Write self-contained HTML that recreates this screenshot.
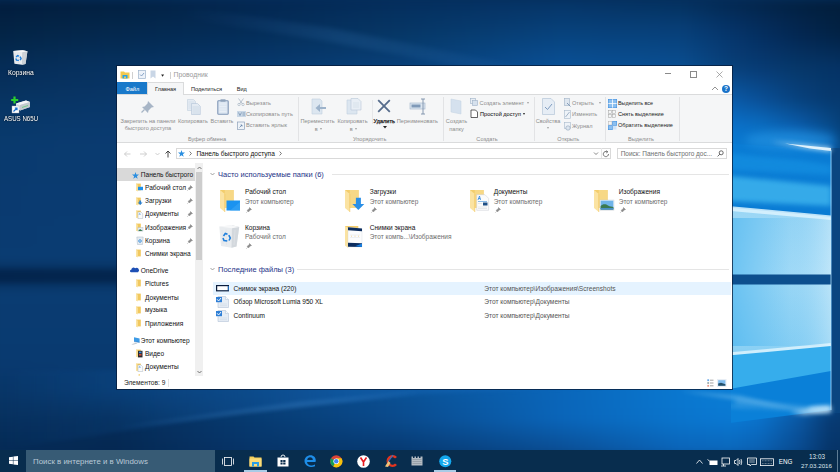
<!DOCTYPE html>
<html><head><meta charset="utf-8"><title>Explorer</title>
<style>
html,body{margin:0;padding:0;width:840px;height:472px;overflow:hidden;background:#06305e;}
.r{position:absolute;}
.t{position:absolute;white-space:nowrap;line-height:1.2;font-family:"Liberation Sans", sans-serif;}
svg.r{overflow:visible;}
</style></head><body>
<svg class="r" style="left:0;top:0" width="840" height="472" viewBox="0 0 840 472">
<defs><linearGradient id="w0" gradientUnits="userSpaceOnUse" x1="0" x2="840" y1="0" y2="0"><stop offset="0.0000" stop-color="#021d3d"/><stop offset="0.1381" stop-color="#022142"/><stop offset="0.2976" stop-color="#032751"/><stop offset="0.4762" stop-color="#042e5d"/><stop offset="0.6667" stop-color="#053669"/><stop offset="0.8095" stop-color="#043261"/><stop offset="0.8714" stop-color="#032953"/><stop offset="0.9048" stop-color="#03264c"/><stop offset="0.9524" stop-color="#022142"/><stop offset="0.9893" stop-color="#021e3d"/><stop offset="1.0000" stop-color="#021e3b"/></linearGradient><linearGradient id="w1" gradientUnits="userSpaceOnUse" x1="0" x2="840" y1="0" y2="0"><stop offset="0.0000" stop-color="#021f40"/><stop offset="0.1381" stop-color="#032345"/><stop offset="0.2976" stop-color="#032953"/><stop offset="0.4762" stop-color="#053160"/><stop offset="0.6667" stop-color="#06396e"/><stop offset="0.8095" stop-color="#053668"/><stop offset="0.8714" stop-color="#042c59"/><stop offset="0.9048" stop-color="#032851"/><stop offset="0.9524" stop-color="#022246"/><stop offset="0.9893" stop-color="#02203f"/><stop offset="1.0000" stop-color="#021f3e"/></linearGradient><linearGradient id="w2" gradientUnits="userSpaceOnUse" x1="0" x2="840" y1="0" y2="0"><stop offset="0.0000" stop-color="#032142"/><stop offset="0.1381" stop-color="#032548"/><stop offset="0.2976" stop-color="#042a55"/><stop offset="0.4762" stop-color="#053362"/><stop offset="0.6667" stop-color="#063c73"/><stop offset="0.8095" stop-color="#063a6f"/><stop offset="0.8714" stop-color="#042f60"/><stop offset="0.9048" stop-color="#042a57"/><stop offset="0.9524" stop-color="#03244a"/><stop offset="0.9893" stop-color="#022142"/><stop offset="1.0000" stop-color="#022040"/></linearGradient><linearGradient id="w3" gradientUnits="userSpaceOnUse" x1="0" x2="840" y1="0" y2="0"><stop offset="0.0000" stop-color="#032344"/><stop offset="0.1381" stop-color="#04274c"/><stop offset="0.2976" stop-color="#042c57"/><stop offset="0.4762" stop-color="#063564"/><stop offset="0.6667" stop-color="#074079"/><stop offset="0.8095" stop-color="#073e76"/><stop offset="0.8714" stop-color="#053266"/><stop offset="0.9048" stop-color="#042d5c"/><stop offset="0.9524" stop-color="#03254e"/><stop offset="0.9893" stop-color="#022245"/><stop offset="1.0000" stop-color="#022142"/></linearGradient><linearGradient id="w4" gradientUnits="userSpaceOnUse" x1="0" x2="840" y1="0" y2="0"><stop offset="0.0000" stop-color="#032547"/><stop offset="0.1381" stop-color="#042950"/><stop offset="0.2976" stop-color="#042e5a"/><stop offset="0.4762" stop-color="#063868"/><stop offset="0.6667" stop-color="#07437e"/><stop offset="0.8095" stop-color="#07417c"/><stop offset="0.8714" stop-color="#05356b"/><stop offset="0.9048" stop-color="#042f61"/><stop offset="0.9524" stop-color="#032752"/><stop offset="0.9893" stop-color="#022449"/><stop offset="1.0000" stop-color="#022347"/></linearGradient><linearGradient id="w5" gradientUnits="userSpaceOnUse" x1="0" x2="840" y1="0" y2="0"><stop offset="0.0000" stop-color="#04274b"/><stop offset="0.1381" stop-color="#052b54"/><stop offset="0.2976" stop-color="#05315f"/><stop offset="0.4762" stop-color="#073a6c"/><stop offset="0.6667" stop-color="#084785"/><stop offset="0.8095" stop-color="#084581"/><stop offset="0.8714" stop-color="#06386f"/><stop offset="0.9048" stop-color="#053266"/><stop offset="0.9524" stop-color="#042b58"/><stop offset="0.9893" stop-color="#032851"/><stop offset="1.0000" stop-color="#03274f"/></linearGradient><linearGradient id="w6" gradientUnits="userSpaceOnUse" x1="0" x2="840" y1="0" y2="0"><stop offset="0.0000" stop-color="#04294f"/><stop offset="0.1381" stop-color="#052e58"/><stop offset="0.2976" stop-color="#063364"/><stop offset="0.4762" stop-color="#073c70"/><stop offset="0.6667" stop-color="#094a8b"/><stop offset="0.8095" stop-color="#094887"/><stop offset="0.8714" stop-color="#073a72"/><stop offset="0.9048" stop-color="#06356a"/><stop offset="0.9524" stop-color="#052f5e"/><stop offset="0.9893" stop-color="#042c58"/><stop offset="1.0000" stop-color="#042b56"/></linearGradient><linearGradient id="w7" gradientUnits="userSpaceOnUse" x1="0" x2="840" y1="0" y2="0"><stop offset="0.0000" stop-color="#052b53"/><stop offset="0.1381" stop-color="#06305d"/><stop offset="0.2976" stop-color="#063668"/><stop offset="0.4762" stop-color="#083e75"/><stop offset="0.6667" stop-color="#094d91"/><stop offset="0.8095" stop-color="#094b8c"/><stop offset="0.8714" stop-color="#073d75"/><stop offset="0.9048" stop-color="#06386f"/><stop offset="0.9524" stop-color="#053364"/><stop offset="0.9893" stop-color="#05305f"/><stop offset="1.0000" stop-color="#042f5e"/></linearGradient><linearGradient id="w8" gradientUnits="userSpaceOnUse" x1="0" x2="840" y1="0" y2="0"><stop offset="0.0000" stop-color="#052c57"/><stop offset="0.1381" stop-color="#063260"/><stop offset="0.2976" stop-color="#07386d"/><stop offset="0.4762" stop-color="#084079"/><stop offset="0.6667" stop-color="#0a5096"/><stop offset="0.8095" stop-color="#0a4f91"/><stop offset="0.8714" stop-color="#08417b"/><stop offset="0.9048" stop-color="#073b74"/><stop offset="0.9524" stop-color="#063769"/><stop offset="0.9893" stop-color="#053366"/><stop offset="1.0000" stop-color="#053265"/></linearGradient><linearGradient id="w9" gradientUnits="userSpaceOnUse" x1="0" x2="840" y1="0" y2="0"><stop offset="0.0000" stop-color="#062e5a"/><stop offset="0.1381" stop-color="#073362"/><stop offset="0.2976" stop-color="#073a6f"/><stop offset="0.4762" stop-color="#08427d"/><stop offset="0.6667" stop-color="#0a5096"/><stop offset="0.8095" stop-color="#0a5196"/><stop offset="0.8714" stop-color="#094786"/><stop offset="0.9048" stop-color="#08407d"/><stop offset="0.9524" stop-color="#063a6e"/><stop offset="0.9893" stop-color="#053568"/><stop offset="1.0000" stop-color="#053468"/></linearGradient><linearGradient id="w10" gradientUnits="userSpaceOnUse" x1="0" x2="840" y1="0" y2="0"><stop offset="0.0000" stop-color="#06305c"/><stop offset="0.1381" stop-color="#073464"/><stop offset="0.2976" stop-color="#083b72"/><stop offset="0.4762" stop-color="#094480"/><stop offset="0.6667" stop-color="#0a5097"/><stop offset="0.8095" stop-color="#0a539a"/><stop offset="0.8714" stop-color="#094d91"/><stop offset="0.9048" stop-color="#094686"/><stop offset="0.9524" stop-color="#073c74"/><stop offset="0.9893" stop-color="#06376b"/><stop offset="1.0000" stop-color="#06366a"/></linearGradient><linearGradient id="w11" gradientUnits="userSpaceOnUse" x1="0" x2="840" y1="0" y2="0"><stop offset="0.0000" stop-color="#07325f"/><stop offset="0.1381" stop-color="#083566"/><stop offset="0.2976" stop-color="#083d74"/><stop offset="0.4762" stop-color="#094684"/><stop offset="0.6667" stop-color="#0a5197"/><stop offset="0.8095" stop-color="#0a559f"/><stop offset="0.8714" stop-color="#0a549d"/><stop offset="0.9048" stop-color="#094b8f"/><stop offset="0.9524" stop-color="#073f79"/><stop offset="0.9893" stop-color="#06386d"/><stop offset="1.0000" stop-color="#06386d"/></linearGradient><linearGradient id="w12" gradientUnits="userSpaceOnUse" x1="0" x2="840" y1="0" y2="0"><stop offset="0.0000" stop-color="#073462"/><stop offset="0.1381" stop-color="#083668"/><stop offset="0.2976" stop-color="#083e77"/><stop offset="0.4762" stop-color="#094888"/><stop offset="0.6667" stop-color="#095197"/><stop offset="0.8095" stop-color="#0a57a3"/><stop offset="0.8714" stop-color="#0a5aa8"/><stop offset="0.9048" stop-color="#0a5098"/><stop offset="0.9524" stop-color="#07427e"/><stop offset="0.9893" stop-color="#063a70"/><stop offset="1.0000" stop-color="#063a70"/></linearGradient><linearGradient id="w13" gradientUnits="userSpaceOnUse" x1="0" x2="840" y1="0" y2="0"><stop offset="0.0000" stop-color="#073565"/><stop offset="0.1381" stop-color="#08376a"/><stop offset="0.2976" stop-color="#093f79"/><stop offset="0.4762" stop-color="#094989"/><stop offset="0.6667" stop-color="#0a549d"/><stop offset="0.8095" stop-color="#0a5dac"/><stop offset="0.8714" stop-color="#0a61b2"/><stop offset="0.9048" stop-color="#0a59a5"/><stop offset="0.9524" stop-color="#084a8b"/><stop offset="0.9893" stop-color="#063f78"/><stop offset="1.0000" stop-color="#063c73"/></linearGradient><linearGradient id="w14" gradientUnits="userSpaceOnUse" x1="0" x2="840" y1="0" y2="0"><stop offset="0.0000" stop-color="#083767"/><stop offset="0.1381" stop-color="#09386c"/><stop offset="0.2976" stop-color="#09407a"/><stop offset="0.4762" stop-color="#0a498b"/><stop offset="0.6667" stop-color="#0a58a3"/><stop offset="0.8095" stop-color="#0a63b5"/><stop offset="0.8714" stop-color="#0a68bc"/><stop offset="0.9048" stop-color="#0a62b2"/><stop offset="0.9524" stop-color="#095199"/><stop offset="0.9893" stop-color="#07447f"/><stop offset="1.0000" stop-color="#063e76"/></linearGradient><linearGradient id="w15" gradientUnits="userSpaceOnUse" x1="0" x2="840" y1="0" y2="0"><stop offset="0.0000" stop-color="#08386a"/><stop offset="0.1381" stop-color="#09396e"/><stop offset="0.2976" stop-color="#09417c"/><stop offset="0.4762" stop-color="#0a4a8c"/><stop offset="0.6667" stop-color="#0a5ca8"/><stop offset="0.8095" stop-color="#0a69bd"/><stop offset="0.8714" stop-color="#0a6fc7"/><stop offset="0.9048" stop-color="#0a6bbe"/><stop offset="0.9524" stop-color="#0a59a6"/><stop offset="0.9893" stop-color="#074987"/><stop offset="1.0000" stop-color="#06407a"/></linearGradient><linearGradient id="w16" gradientUnits="userSpaceOnUse" x1="0" x2="840" y1="0" y2="0"><stop offset="0.0000" stop-color="#08396b"/><stop offset="0.1381" stop-color="#093a6f"/><stop offset="0.2976" stop-color="#0a417d"/><stop offset="0.4762" stop-color="#0a4a8c"/><stop offset="0.6667" stop-color="#0a5eab"/><stop offset="0.8095" stop-color="#0a6dc2"/><stop offset="0.8714" stop-color="#0a74cc"/><stop offset="0.9048" stop-color="#0a71c6"/><stop offset="0.9524" stop-color="#0a63b5"/><stop offset="0.9893" stop-color="#085399"/><stop offset="1.0000" stop-color="#06447f"/></linearGradient><linearGradient id="w17" gradientUnits="userSpaceOnUse" x1="0" x2="840" y1="0" y2="0"><stop offset="0.0000" stop-color="#093a6d"/><stop offset="0.1381" stop-color="#0a3a70"/><stop offset="0.2976" stop-color="#0a427d"/><stop offset="0.4762" stop-color="#0a4a8c"/><stop offset="0.6667" stop-color="#0a60ad"/><stop offset="0.8095" stop-color="#0a70c5"/><stop offset="0.8714" stop-color="#0a78d0"/><stop offset="0.9048" stop-color="#0a76cc"/><stop offset="0.9524" stop-color="#0a6ec3"/><stop offset="0.9893" stop-color="#095eac"/><stop offset="1.0000" stop-color="#074884"/></linearGradient><linearGradient id="w18" gradientUnits="userSpaceOnUse" x1="0" x2="840" y1="0" y2="0"><stop offset="0.0000" stop-color="#093a6e"/><stop offset="0.1381" stop-color="#0a3b70"/><stop offset="0.2976" stop-color="#0a427e"/><stop offset="0.4762" stop-color="#0a4b8d"/><stop offset="0.6667" stop-color="#0a61ae"/><stop offset="0.8095" stop-color="#0a73c7"/><stop offset="0.8714" stop-color="#0a7ad2"/><stop offset="0.9048" stop-color="#0a7ad0"/><stop offset="0.9524" stop-color="#0a74cc"/><stop offset="0.9893" stop-color="#0a65b9"/><stop offset="1.0000" stop-color="#074987"/></linearGradient><linearGradient id="w19" gradientUnits="userSpaceOnUse" x1="0" x2="840" y1="0" y2="0"><stop offset="0.0000" stop-color="#093a6e"/><stop offset="0.1381" stop-color="#0a3b70"/><stop offset="0.2976" stop-color="#0a437f"/><stop offset="0.4762" stop-color="#0a4d8f"/><stop offset="0.6667" stop-color="#0a62af"/><stop offset="0.8095" stop-color="#0a73c7"/><stop offset="0.8714" stop-color="#0a7ad2"/><stop offset="0.9048" stop-color="#0a7ad0"/><stop offset="0.9524" stop-color="#0a75cd"/><stop offset="0.9893" stop-color="#0a68bd"/><stop offset="1.0000" stop-color="#074784"/></linearGradient><linearGradient id="w20" gradientUnits="userSpaceOnUse" x1="0" x2="840" y1="0" y2="0"><stop offset="0.0000" stop-color="#093a6f"/><stop offset="0.1381" stop-color="#0a3b71"/><stop offset="0.2976" stop-color="#0a4480"/><stop offset="0.4762" stop-color="#0a4f92"/><stop offset="0.6667" stop-color="#0a63b1"/><stop offset="0.8095" stop-color="#0a73c7"/><stop offset="0.8714" stop-color="#0a79d1"/><stop offset="0.9048" stop-color="#0a79d0"/><stop offset="0.9524" stop-color="#0a75cd"/><stop offset="0.9893" stop-color="#0a6bc0"/><stop offset="1.0000" stop-color="#074581"/></linearGradient><linearGradient id="w21" gradientUnits="userSpaceOnUse" x1="0" x2="840" y1="0" y2="0"><stop offset="0.0000" stop-color="#093a6f"/><stop offset="0.1381" stop-color="#0a3b71"/><stop offset="0.2976" stop-color="#0a4682"/><stop offset="0.4762" stop-color="#0a5195"/><stop offset="0.6667" stop-color="#0a64b2"/><stop offset="0.8095" stop-color="#0a73c8"/><stop offset="0.8714" stop-color="#0a79d1"/><stop offset="0.9048" stop-color="#0a79d0"/><stop offset="0.9524" stop-color="#0a76ce"/><stop offset="0.9893" stop-color="#0a6ec4"/><stop offset="1.0000" stop-color="#07437e"/></linearGradient><linearGradient id="w22" gradientUnits="userSpaceOnUse" x1="0" x2="840" y1="0" y2="0"><stop offset="0.0000" stop-color="#0a3a6f"/><stop offset="0.1381" stop-color="#0a3c71"/><stop offset="0.2976" stop-color="#0a4783"/><stop offset="0.4762" stop-color="#0a5397"/><stop offset="0.6667" stop-color="#0a65b3"/><stop offset="0.8095" stop-color="#0a73c8"/><stop offset="0.8714" stop-color="#0a79d1"/><stop offset="0.9048" stop-color="#0a79d0"/><stop offset="0.9524" stop-color="#0a77cf"/><stop offset="0.9893" stop-color="#0a71c7"/><stop offset="1.0000" stop-color="#08417b"/></linearGradient><linearGradient id="w23" gradientUnits="userSpaceOnUse" x1="0" x2="840" y1="0" y2="0"><stop offset="0.0000" stop-color="#0a3a70"/><stop offset="0.1381" stop-color="#0a3c72"/><stop offset="0.2976" stop-color="#0a4884"/><stop offset="0.4762" stop-color="#0a559a"/><stop offset="0.6667" stop-color="#0a66b4"/><stop offset="0.8095" stop-color="#0a73c8"/><stop offset="0.8714" stop-color="#0a78d0"/><stop offset="0.9048" stop-color="#0a78d0"/><stop offset="0.9524" stop-color="#0a77cf"/><stop offset="0.9893" stop-color="#0a74cb"/><stop offset="1.0000" stop-color="#083f78"/></linearGradient><linearGradient id="w24" gradientUnits="userSpaceOnUse" x1="0" x2="840" y1="0" y2="0"><stop offset="0.0000" stop-color="#0a3a70"/><stop offset="0.1381" stop-color="#0a3c72"/><stop offset="0.2976" stop-color="#0a4986"/><stop offset="0.4762" stop-color="#0a579c"/><stop offset="0.6667" stop-color="#0a67b5"/><stop offset="0.8095" stop-color="#0a73c8"/><stop offset="0.8714" stop-color="#0a78d0"/><stop offset="0.9048" stop-color="#0a78d0"/><stop offset="0.9524" stop-color="#0a78d0"/><stop offset="0.9893" stop-color="#0a77ce"/><stop offset="1.0000" stop-color="#083d75"/></linearGradient><linearGradient id="w25" gradientUnits="userSpaceOnUse" x1="0" x2="840" y1="0" y2="0"><stop offset="0.0000" stop-color="#0a3a70"/><stop offset="0.1381" stop-color="#0a3c72"/><stop offset="0.2976" stop-color="#0a4986"/><stop offset="0.4762" stop-color="#0a589d"/><stop offset="0.6667" stop-color="#0a67b6"/><stop offset="0.8095" stop-color="#0a73c8"/><stop offset="0.8714" stop-color="#0a78d0"/><stop offset="0.9048" stop-color="#0a78d0"/><stop offset="0.9524" stop-color="#0a78d0"/><stop offset="0.9893" stop-color="#0a78d0"/><stop offset="1.0000" stop-color="#083c74"/></linearGradient><linearGradient id="w26" gradientUnits="userSpaceOnUse" x1="0" x2="840" y1="0" y2="0"><stop offset="0.0000" stop-color="#0a3a70"/><stop offset="0.1381" stop-color="#0a3c72"/><stop offset="0.2976" stop-color="#0a4986"/><stop offset="0.4762" stop-color="#0a589d"/><stop offset="0.6667" stop-color="#0a67b6"/><stop offset="0.8095" stop-color="#0a73c8"/><stop offset="0.8714" stop-color="#0a78d0"/><stop offset="0.9048" stop-color="#0a78d0"/><stop offset="0.9524" stop-color="#0a78d0"/><stop offset="0.9893" stop-color="#0a78d0"/><stop offset="1.0000" stop-color="#083c74"/></linearGradient><linearGradient id="w27" gradientUnits="userSpaceOnUse" x1="0" x2="840" y1="0" y2="0"><stop offset="0.0000" stop-color="#0a3b71"/><stop offset="0.1381" stop-color="#0a3c72"/><stop offset="0.2976" stop-color="#0a4986"/><stop offset="0.4762" stop-color="#0a589d"/><stop offset="0.6667" stop-color="#0a67b6"/><stop offset="0.8095" stop-color="#0a73c8"/><stop offset="0.8714" stop-color="#0a78d0"/><stop offset="0.9048" stop-color="#0a78d0"/><stop offset="0.9524" stop-color="#0a78d0"/><stop offset="0.9893" stop-color="#0a78d0"/><stop offset="1.0000" stop-color="#083c74"/></linearGradient><linearGradient id="w28" gradientUnits="userSpaceOnUse" x1="0" x2="840" y1="0" y2="0"><stop offset="0.0000" stop-color="#0a3b71"/><stop offset="0.1381" stop-color="#0a3c72"/><stop offset="0.2976" stop-color="#0a4986"/><stop offset="0.4762" stop-color="#0a589d"/><stop offset="0.6667" stop-color="#0a67b6"/><stop offset="0.8095" stop-color="#0a73c8"/><stop offset="0.8714" stop-color="#0a78d0"/><stop offset="0.9048" stop-color="#0a78d0"/><stop offset="0.9524" stop-color="#0a78d0"/><stop offset="0.9893" stop-color="#0a78d0"/><stop offset="1.0000" stop-color="#083c74"/></linearGradient><linearGradient id="w29" gradientUnits="userSpaceOnUse" x1="0" x2="840" y1="0" y2="0"><stop offset="0.0000" stop-color="#0a3b71"/><stop offset="0.1381" stop-color="#0a3c72"/><stop offset="0.2976" stop-color="#0a4986"/><stop offset="0.4762" stop-color="#0a589d"/><stop offset="0.6667" stop-color="#0a67b6"/><stop offset="0.8095" stop-color="#0a73c8"/><stop offset="0.8714" stop-color="#0a78d0"/><stop offset="0.9048" stop-color="#0a78d0"/><stop offset="0.9524" stop-color="#0a78d0"/><stop offset="0.9893" stop-color="#0a78d0"/><stop offset="1.0000" stop-color="#083c74"/></linearGradient><linearGradient id="w30" gradientUnits="userSpaceOnUse" x1="0" x2="840" y1="0" y2="0"><stop offset="0.0000" stop-color="#0a3b71"/><stop offset="0.1381" stop-color="#0a3c72"/><stop offset="0.2976" stop-color="#0a4986"/><stop offset="0.4762" stop-color="#0a589d"/><stop offset="0.6667" stop-color="#0a67b6"/><stop offset="0.8095" stop-color="#0a73c8"/><stop offset="0.8714" stop-color="#0a78d0"/><stop offset="0.9048" stop-color="#0a78d0"/><stop offset="0.9524" stop-color="#0a78d0"/><stop offset="0.9893" stop-color="#0a78d0"/><stop offset="1.0000" stop-color="#083c74"/></linearGradient><linearGradient id="w31" gradientUnits="userSpaceOnUse" x1="0" x2="840" y1="0" y2="0"><stop offset="0.0000" stop-color="#0a3c72"/><stop offset="0.1381" stop-color="#0a3c72"/><stop offset="0.2976" stop-color="#0a4986"/><stop offset="0.4762" stop-color="#0a589d"/><stop offset="0.6667" stop-color="#0a67b6"/><stop offset="0.8095" stop-color="#0a73c8"/><stop offset="0.8714" stop-color="#0a78d0"/><stop offset="0.9048" stop-color="#0a78d0"/><stop offset="0.9524" stop-color="#0a78d0"/><stop offset="0.9893" stop-color="#0a78d0"/><stop offset="1.0000" stop-color="#083c74"/></linearGradient><linearGradient id="w32" gradientUnits="userSpaceOnUse" x1="0" x2="840" y1="0" y2="0"><stop offset="0.0000" stop-color="#0a3c72"/><stop offset="0.1381" stop-color="#0a3c72"/><stop offset="0.2976" stop-color="#0a4986"/><stop offset="0.4762" stop-color="#0a589d"/><stop offset="0.6667" stop-color="#0a67b6"/><stop offset="0.8095" stop-color="#0a73c8"/><stop offset="0.8714" stop-color="#0a78d0"/><stop offset="0.9048" stop-color="#0a78d0"/><stop offset="0.9524" stop-color="#0a78d0"/><stop offset="0.9893" stop-color="#0a78d0"/><stop offset="1.0000" stop-color="#083c74"/></linearGradient><linearGradient id="w33" gradientUnits="userSpaceOnUse" x1="0" x2="840" y1="0" y2="0"><stop offset="0.0000" stop-color="#073261"/><stop offset="0.1381" stop-color="#073363"/><stop offset="0.2976" stop-color="#083e74"/><stop offset="0.4762" stop-color="#094a87"/><stop offset="0.6667" stop-color="#0a579b"/><stop offset="0.8095" stop-color="#0a60ab"/><stop offset="0.8714" stop-color="#0a64b1"/><stop offset="0.9048" stop-color="#0a64b1"/><stop offset="0.9524" stop-color="#0a64b1"/><stop offset="0.9893" stop-color="#0a64b1"/><stop offset="1.0000" stop-color="#083b72"/></linearGradient><linearGradient id="w34" gradientUnits="userSpaceOnUse" x1="0" x2="840" y1="0" y2="0"><stop offset="0.0000" stop-color="#03244a"/><stop offset="0.1381" stop-color="#04284e"/><stop offset="0.2976" stop-color="#062f5b"/><stop offset="0.4762" stop-color="#073869"/><stop offset="0.6667" stop-color="#094178"/><stop offset="0.8095" stop-color="#0a4783"/><stop offset="0.8714" stop-color="#0b4a88"/><stop offset="0.9048" stop-color="#0b4a88"/><stop offset="0.9524" stop-color="#0b4a88"/><stop offset="0.9893" stop-color="#0b4a88"/><stop offset="1.0000" stop-color="#073a70"/></linearGradient><linearGradient id="w35" gradientUnits="userSpaceOnUse" x1="0" x2="840" y1="0" y2="0"><stop offset="0.0000" stop-color="#073261"/><stop offset="0.1381" stop-color="#073363"/><stop offset="0.2976" stop-color="#083e74"/><stop offset="0.4762" stop-color="#094a87"/><stop offset="0.6667" stop-color="#0a579b"/><stop offset="0.8095" stop-color="#0a60ab"/><stop offset="0.8714" stop-color="#0a64b1"/><stop offset="0.9048" stop-color="#0a64b1"/><stop offset="0.9524" stop-color="#0a64b1"/><stop offset="0.9893" stop-color="#0a64b1"/><stop offset="1.0000" stop-color="#083b72"/></linearGradient><linearGradient id="w36" gradientUnits="userSpaceOnUse" x1="0" x2="840" y1="0" y2="0"><stop offset="0.0000" stop-color="#0a3c72"/><stop offset="0.1381" stop-color="#0a3c72"/><stop offset="0.2976" stop-color="#0a4986"/><stop offset="0.4762" stop-color="#0a589d"/><stop offset="0.6667" stop-color="#0a67b6"/><stop offset="0.8095" stop-color="#0a73c8"/><stop offset="0.8714" stop-color="#0a78d0"/><stop offset="0.9048" stop-color="#0a78d0"/><stop offset="0.9524" stop-color="#0a78d0"/><stop offset="0.9893" stop-color="#0a78d0"/><stop offset="1.0000" stop-color="#083c74"/></linearGradient><linearGradient id="w37" gradientUnits="userSpaceOnUse" x1="0" x2="840" y1="0" y2="0"><stop offset="0.0000" stop-color="#0a3c72"/><stop offset="0.1381" stop-color="#0a3c72"/><stop offset="0.2976" stop-color="#0a4986"/><stop offset="0.4762" stop-color="#0a589d"/><stop offset="0.6667" stop-color="#0a67b6"/><stop offset="0.8095" stop-color="#0a73c8"/><stop offset="0.8714" stop-color="#0a78d0"/><stop offset="0.9048" stop-color="#0a78d0"/><stop offset="0.9524" stop-color="#0a78d0"/><stop offset="0.9893" stop-color="#0a78d0"/><stop offset="1.0000" stop-color="#083c74"/></linearGradient><linearGradient id="w38" gradientUnits="userSpaceOnUse" x1="0" x2="840" y1="0" y2="0"><stop offset="0.0000" stop-color="#0a3b71"/><stop offset="0.1381" stop-color="#0a3b71"/><stop offset="0.2976" stop-color="#0a4986"/><stop offset="0.4762" stop-color="#0a579d"/><stop offset="0.6667" stop-color="#0a67b6"/><stop offset="0.8095" stop-color="#0a73c8"/><stop offset="0.8714" stop-color="#0a78d0"/><stop offset="0.9048" stop-color="#0a78d0"/><stop offset="0.9524" stop-color="#0a78d0"/><stop offset="0.9893" stop-color="#0a78d0"/><stop offset="1.0000" stop-color="#083c74"/></linearGradient><linearGradient id="w39" gradientUnits="userSpaceOnUse" x1="0" x2="840" y1="0" y2="0"><stop offset="0.0000" stop-color="#0a3b71"/><stop offset="0.1381" stop-color="#0a3b71"/><stop offset="0.2976" stop-color="#0a4886"/><stop offset="0.4762" stop-color="#0a579d"/><stop offset="0.6667" stop-color="#0a67b6"/><stop offset="0.8095" stop-color="#0a73c8"/><stop offset="0.8714" stop-color="#0a78d0"/><stop offset="0.9048" stop-color="#0a78d0"/><stop offset="0.9524" stop-color="#0a78d0"/><stop offset="0.9893" stop-color="#0a78d0"/><stop offset="1.0000" stop-color="#083c74"/></linearGradient><linearGradient id="w40" gradientUnits="userSpaceOnUse" x1="0" x2="840" y1="0" y2="0"><stop offset="0.0000" stop-color="#0a3b71"/><stop offset="0.1381" stop-color="#0a3b71"/><stop offset="0.2976" stop-color="#0a4886"/><stop offset="0.4762" stop-color="#0a579d"/><stop offset="0.6667" stop-color="#0a67b5"/><stop offset="0.8095" stop-color="#0a73c8"/><stop offset="0.8714" stop-color="#0a78d0"/><stop offset="0.9048" stop-color="#0a78d0"/><stop offset="0.9524" stop-color="#0a78d0"/><stop offset="0.9893" stop-color="#0a78d0"/><stop offset="1.0000" stop-color="#083c74"/></linearGradient><linearGradient id="w41" gradientUnits="userSpaceOnUse" x1="0" x2="840" y1="0" y2="0"><stop offset="0.0000" stop-color="#093b71"/><stop offset="0.1381" stop-color="#093b71"/><stop offset="0.2976" stop-color="#0a4886"/><stop offset="0.4762" stop-color="#0a579d"/><stop offset="0.6667" stop-color="#0a67b5"/><stop offset="0.8095" stop-color="#0a73c8"/><stop offset="0.8714" stop-color="#0a78d0"/><stop offset="0.9048" stop-color="#0a78d0"/><stop offset="0.9524" stop-color="#0a78d0"/><stop offset="0.9893" stop-color="#0a78d0"/><stop offset="1.0000" stop-color="#083c74"/></linearGradient><linearGradient id="w42" gradientUnits="userSpaceOnUse" x1="0" x2="840" y1="0" y2="0"><stop offset="0.0000" stop-color="#093b71"/><stop offset="0.1381" stop-color="#093b71"/><stop offset="0.2976" stop-color="#094885"/><stop offset="0.4762" stop-color="#0a579d"/><stop offset="0.6667" stop-color="#0a67b5"/><stop offset="0.8095" stop-color="#0a73c8"/><stop offset="0.8714" stop-color="#0a78d0"/><stop offset="0.9048" stop-color="#0a78d0"/><stop offset="0.9524" stop-color="#0a78d0"/><stop offset="0.9893" stop-color="#0a78d0"/><stop offset="1.0000" stop-color="#083c74"/></linearGradient><linearGradient id="w43" gradientUnits="userSpaceOnUse" x1="0" x2="840" y1="0" y2="0"><stop offset="0.0000" stop-color="#093a70"/><stop offset="0.1381" stop-color="#093a70"/><stop offset="0.2976" stop-color="#094885"/><stop offset="0.4762" stop-color="#0a579c"/><stop offset="0.6667" stop-color="#0a67b5"/><stop offset="0.8095" stop-color="#0a73c8"/><stop offset="0.8714" stop-color="#0a78d0"/><stop offset="0.9048" stop-color="#0a78d0"/><stop offset="0.9524" stop-color="#0a78d0"/><stop offset="0.9893" stop-color="#0a78d0"/><stop offset="1.0000" stop-color="#083c74"/></linearGradient><linearGradient id="w44" gradientUnits="userSpaceOnUse" x1="0" x2="840" y1="0" y2="0"><stop offset="0.0000" stop-color="#093a70"/><stop offset="0.1381" stop-color="#093a70"/><stop offset="0.2976" stop-color="#094885"/><stop offset="0.4762" stop-color="#09579c"/><stop offset="0.6667" stop-color="#0a67b5"/><stop offset="0.8095" stop-color="#0a73c8"/><stop offset="0.8714" stop-color="#0a78d0"/><stop offset="0.9048" stop-color="#0a78d0"/><stop offset="0.9524" stop-color="#0a78d0"/><stop offset="0.9893" stop-color="#0a78d0"/><stop offset="1.0000" stop-color="#083c74"/></linearGradient><linearGradient id="w45" gradientUnits="userSpaceOnUse" x1="0" x2="840" y1="0" y2="0"><stop offset="0.0000" stop-color="#09396f"/><stop offset="0.1381" stop-color="#093a70"/><stop offset="0.2976" stop-color="#094683"/><stop offset="0.4762" stop-color="#0a569b"/><stop offset="0.6667" stop-color="#0a67b6"/><stop offset="0.8095" stop-color="#0a73c9"/><stop offset="0.8714" stop-color="#0a79d1"/><stop offset="0.9048" stop-color="#0a78d0"/><stop offset="0.9524" stop-color="#0a78d0"/><stop offset="0.9893" stop-color="#0a74ca"/><stop offset="1.0000" stop-color="#083c74"/></linearGradient><linearGradient id="w46" gradientUnits="userSpaceOnUse" x1="0" x2="840" y1="0" y2="0"><stop offset="0.0000" stop-color="#09386d"/><stop offset="0.1381" stop-color="#083a70"/><stop offset="0.2976" stop-color="#094480"/><stop offset="0.4762" stop-color="#0a559a"/><stop offset="0.6667" stop-color="#0a66b7"/><stop offset="0.8095" stop-color="#0a75cb"/><stop offset="0.8714" stop-color="#0a7ad2"/><stop offset="0.9048" stop-color="#0a79d1"/><stop offset="0.9524" stop-color="#0a78d0"/><stop offset="0.9893" stop-color="#0a6cbf"/><stop offset="1.0000" stop-color="#083c74"/></linearGradient><linearGradient id="w47" gradientUnits="userSpaceOnUse" x1="0" x2="840" y1="0" y2="0"><stop offset="0.0000" stop-color="#08376a"/><stop offset="0.1381" stop-color="#083a70"/><stop offset="0.2976" stop-color="#08427d"/><stop offset="0.4762" stop-color="#0a5398"/><stop offset="0.6667" stop-color="#0a66b9"/><stop offset="0.8095" stop-color="#0a76cd"/><stop offset="0.8714" stop-color="#0a7cd4"/><stop offset="0.9048" stop-color="#0a7ad2"/><stop offset="0.9524" stop-color="#0a78d0"/><stop offset="0.9893" stop-color="#0a63b4"/><stop offset="1.0000" stop-color="#083c74"/></linearGradient><linearGradient id="w48" gradientUnits="userSpaceOnUse" x1="0" x2="840" y1="0" y2="0"><stop offset="0.0000" stop-color="#083668"/><stop offset="0.1381" stop-color="#073a70"/><stop offset="0.2976" stop-color="#08407a"/><stop offset="0.4762" stop-color="#0a5296"/><stop offset="0.6667" stop-color="#0a66ba"/><stop offset="0.8095" stop-color="#0a78d0"/><stop offset="0.8714" stop-color="#0a7ed6"/><stop offset="0.9048" stop-color="#0a7bd3"/><stop offset="0.9524" stop-color="#0a78d0"/><stop offset="0.9893" stop-color="#0a5ba9"/><stop offset="1.0000" stop-color="#083c74"/></linearGradient><linearGradient id="w49" gradientUnits="userSpaceOnUse" x1="0" x2="840" y1="0" y2="0"><stop offset="0.0000" stop-color="#083566"/><stop offset="0.1381" stop-color="#07376b"/><stop offset="0.2976" stop-color="#083f78"/><stop offset="0.4762" stop-color="#0a5094"/><stop offset="0.6667" stop-color="#0a66ba"/><stop offset="0.8095" stop-color="#0a77cf"/><stop offset="0.8714" stop-color="#0a7dd5"/><stop offset="0.9048" stop-color="#0a79d1"/><stop offset="0.9524" stop-color="#0a70c5"/><stop offset="0.9893" stop-color="#09539c"/><stop offset="1.0000" stop-color="#083c74"/></linearGradient><linearGradient id="w50" gradientUnits="userSpaceOnUse" x1="0" x2="840" y1="0" y2="0"><stop offset="0.0000" stop-color="#073363"/><stop offset="0.1381" stop-color="#063364"/><stop offset="0.2976" stop-color="#073d75"/><stop offset="0.4762" stop-color="#0a4e91"/><stop offset="0.6667" stop-color="#0a65b9"/><stop offset="0.8095" stop-color="#0a76ce"/><stop offset="0.8714" stop-color="#0a7bd4"/><stop offset="0.9048" stop-color="#0a76cf"/><stop offset="0.9524" stop-color="#0a67b9"/><stop offset="0.9893" stop-color="#094b8e"/><stop offset="1.0000" stop-color="#083b73"/></linearGradient><linearGradient id="w51" gradientUnits="userSpaceOnUse" x1="0" x2="840" y1="0" y2="0"><stop offset="0.0000" stop-color="#073261"/><stop offset="0.1381" stop-color="#06305e"/><stop offset="0.2976" stop-color="#073c73"/><stop offset="0.4762" stop-color="#0a4c8f"/><stop offset="0.6667" stop-color="#0a65b9"/><stop offset="0.8095" stop-color="#0a75cd"/><stop offset="0.8714" stop-color="#0a7ad3"/><stop offset="0.9048" stop-color="#0a74cc"/><stop offset="0.9524" stop-color="#0a5ead"/><stop offset="0.9893" stop-color="#084280"/><stop offset="1.0000" stop-color="#073b73"/></linearGradient><linearGradient id="w52" gradientUnits="userSpaceOnUse" x1="0" x2="840" y1="0" y2="0"><stop offset="0.0000" stop-color="#06305e"/><stop offset="0.1381" stop-color="#052c58"/><stop offset="0.2976" stop-color="#063a70"/><stop offset="0.4762" stop-color="#0a4a8c"/><stop offset="0.6667" stop-color="#0a64b8"/><stop offset="0.8095" stop-color="#0a74cc"/><stop offset="0.8714" stop-color="#0a78d2"/><stop offset="0.9048" stop-color="#0a71ca"/><stop offset="0.9524" stop-color="#0a56a1"/><stop offset="0.9893" stop-color="#073a72"/><stop offset="1.0000" stop-color="#073a72"/></linearGradient><linearGradient id="w53" gradientUnits="userSpaceOnUse" x1="0" x2="840" y1="0" y2="0"><stop offset="0.0000" stop-color="#062e5c"/><stop offset="0.1381" stop-color="#052b56"/><stop offset="0.2976" stop-color="#06386e"/><stop offset="0.4762" stop-color="#094685"/><stop offset="0.6667" stop-color="#0a5eae"/><stop offset="0.8095" stop-color="#0a70c7"/><stop offset="0.8714" stop-color="#0a73cc"/><stop offset="0.9048" stop-color="#0a6cc3"/><stop offset="0.9524" stop-color="#0a539c"/><stop offset="0.9893" stop-color="#07386f"/><stop offset="1.0000" stop-color="#07386f"/></linearGradient><linearGradient id="w54" gradientUnits="userSpaceOnUse" x1="0" x2="840" y1="0" y2="0"><stop offset="0.0000" stop-color="#052d59"/><stop offset="0.1381" stop-color="#052a55"/><stop offset="0.2976" stop-color="#06376c"/><stop offset="0.4762" stop-color="#08417e"/><stop offset="0.6667" stop-color="#0a58a5"/><stop offset="0.8095" stop-color="#0a6bc1"/><stop offset="0.8714" stop-color="#0a6ec5"/><stop offset="0.9048" stop-color="#0a67bc"/><stop offset="0.9524" stop-color="#094f97"/><stop offset="0.9893" stop-color="#06376d"/><stop offset="1.0000" stop-color="#06376d"/></linearGradient><linearGradient id="w55" gradientUnits="userSpaceOnUse" x1="0" x2="840" y1="0" y2="0"><stop offset="0.0000" stop-color="#052b57"/><stop offset="0.1381" stop-color="#052953"/><stop offset="0.2976" stop-color="#06356a"/><stop offset="0.4762" stop-color="#073d77"/><stop offset="0.6667" stop-color="#0a529b"/><stop offset="0.8095" stop-color="#0a67bc"/><stop offset="0.8714" stop-color="#0a6abf"/><stop offset="0.9048" stop-color="#0a63b5"/><stop offset="0.9524" stop-color="#094c92"/><stop offset="0.9893" stop-color="#06356a"/><stop offset="1.0000" stop-color="#06356a"/></linearGradient><linearGradient id="w56" gradientUnits="userSpaceOnUse" x1="0" x2="840" y1="0" y2="0"><stop offset="0.0000" stop-color="#052a55"/><stop offset="0.1381" stop-color="#052852"/><stop offset="0.2976" stop-color="#063468"/><stop offset="0.4762" stop-color="#063a72"/><stop offset="0.6667" stop-color="#0a4e94"/><stop offset="0.8095" stop-color="#0a64b8"/><stop offset="0.8714" stop-color="#0a66ba"/><stop offset="0.9048" stop-color="#0a5fb0"/><stop offset="0.9524" stop-color="#084a8e"/><stop offset="0.9893" stop-color="#063468"/><stop offset="1.0000" stop-color="#063468"/></linearGradient>
 <linearGradient id="pane1" gradientUnits="userSpaceOnUse" x1="0" y1="148" x2="0" y2="275">
  <stop offset="0" stop-color="#0a7ad4"/>
  <stop offset="0.2" stop-color="#0b82da"/>
  <stop offset="0.24" stop-color="#1a98e6"/>
  <stop offset="0.33" stop-color="#2aa4ec"/>
  <stop offset="0.38" stop-color="#1690e0"/>
  <stop offset="0.46" stop-color="#1c98e4"/>
  <stop offset="0.52" stop-color="#5cc0f0"/>
  <stop offset="0.6" stop-color="#8ed3f5"/>
  <stop offset="1" stop-color="#a8ddf7"/>
 </linearGradient>
 <linearGradient id="pane2" gradientUnits="userSpaceOnUse" x1="0" y1="284" x2="0" y2="412">
  <stop offset="0" stop-color="#a0d9f6"/>
  <stop offset="0.44" stop-color="#8cd0f4"/>
  <stop offset="0.52" stop-color="#b8e6fb"/>
  <stop offset="0.56" stop-color="#40b4ef"/>
  <stop offset="0.75" stop-color="#2aa6ec"/>
  <stop offset="1" stop-color="#1c9ae6"/>
 </linearGradient>
 <filter color-interpolation-filters="sRGB" id="bw" x="-5%" y="-5%" width="110%" height="110%"><feGaussianBlur stdDeviation="5"/></filter>
 <filter color-interpolation-filters="sRGB" id="b2" x="-20%" y="-50%" width="140%" height="200%"><feGaussianBlur stdDeviation="2"/></filter>
 <filter color-interpolation-filters="sRGB" id="b1" x="-10%" y="-10%" width="120%" height="120%"><feGaussianBlur stdDeviation="0.7"/></filter>
</defs>
<rect width="840" height="472" fill="#062e5c"/>
<g filter="url(#bw)"><rect x="-10" y="0" width="860" height="8.5" fill="url(#w0)"/><rect x="-10" y="8" width="860" height="8.5" fill="url(#w1)"/><rect x="-10" y="16" width="860" height="8.5" fill="url(#w2)"/><rect x="-10" y="24" width="860" height="8.5" fill="url(#w3)"/><rect x="-10" y="32" width="860" height="8.5" fill="url(#w4)"/><rect x="-10" y="40" width="860" height="8.5" fill="url(#w5)"/><rect x="-10" y="48" width="860" height="8.5" fill="url(#w6)"/><rect x="-10" y="56" width="860" height="8.5" fill="url(#w7)"/><rect x="-10" y="64" width="860" height="8.5" fill="url(#w8)"/><rect x="-10" y="72" width="860" height="8.5" fill="url(#w9)"/><rect x="-10" y="80" width="860" height="8.5" fill="url(#w10)"/><rect x="-10" y="88" width="860" height="8.5" fill="url(#w11)"/><rect x="-10" y="96" width="860" height="8.5" fill="url(#w12)"/><rect x="-10" y="104" width="860" height="8.5" fill="url(#w13)"/><rect x="-10" y="112" width="860" height="8.5" fill="url(#w14)"/><rect x="-10" y="120" width="860" height="8.5" fill="url(#w15)"/><rect x="-10" y="128" width="860" height="8.5" fill="url(#w16)"/><rect x="-10" y="136" width="860" height="8.5" fill="url(#w17)"/><rect x="-10" y="144" width="860" height="8.5" fill="url(#w18)"/><rect x="-10" y="152" width="860" height="8.5" fill="url(#w19)"/><rect x="-10" y="160" width="860" height="8.5" fill="url(#w20)"/><rect x="-10" y="168" width="860" height="8.5" fill="url(#w21)"/><rect x="-10" y="176" width="860" height="8.5" fill="url(#w22)"/><rect x="-10" y="184" width="860" height="8.5" fill="url(#w23)"/><rect x="-10" y="192" width="860" height="8.5" fill="url(#w24)"/><rect x="-10" y="200" width="860" height="8.5" fill="url(#w25)"/><rect x="-10" y="208" width="860" height="8.5" fill="url(#w26)"/><rect x="-10" y="216" width="860" height="8.5" fill="url(#w27)"/><rect x="-10" y="224" width="860" height="8.5" fill="url(#w28)"/><rect x="-10" y="232" width="860" height="8.5" fill="url(#w29)"/><rect x="-10" y="240" width="860" height="8.5" fill="url(#w30)"/><rect x="-10" y="248" width="860" height="8.5" fill="url(#w31)"/><rect x="-10" y="256" width="860" height="8.5" fill="url(#w32)"/><rect x="-10" y="264" width="860" height="8.5" fill="url(#w33)"/><rect x="-10" y="272" width="860" height="8.5" fill="url(#w34)"/><rect x="-10" y="280" width="860" height="8.5" fill="url(#w35)"/><rect x="-10" y="288" width="860" height="8.5" fill="url(#w36)"/><rect x="-10" y="296" width="860" height="8.5" fill="url(#w37)"/><rect x="-10" y="304" width="860" height="8.5" fill="url(#w38)"/><rect x="-10" y="312" width="860" height="8.5" fill="url(#w39)"/><rect x="-10" y="320" width="860" height="8.5" fill="url(#w40)"/><rect x="-10" y="328" width="860" height="8.5" fill="url(#w41)"/><rect x="-10" y="336" width="860" height="8.5" fill="url(#w42)"/><rect x="-10" y="344" width="860" height="8.5" fill="url(#w43)"/><rect x="-10" y="352" width="860" height="8.5" fill="url(#w44)"/><rect x="-10" y="360" width="860" height="8.5" fill="url(#w45)"/><rect x="-10" y="368" width="860" height="8.5" fill="url(#w46)"/><rect x="-10" y="376" width="860" height="8.5" fill="url(#w47)"/><rect x="-10" y="384" width="860" height="8.5" fill="url(#w48)"/><rect x="-10" y="392" width="860" height="8.5" fill="url(#w49)"/><rect x="-10" y="400" width="860" height="8.5" fill="url(#w50)"/><rect x="-10" y="408" width="860" height="8.5" fill="url(#w51)"/><rect x="-10" y="416" width="860" height="8.5" fill="url(#w52)"/><rect x="-10" y="424" width="860" height="8.5" fill="url(#w53)"/><rect x="-10" y="432" width="860" height="8.5" fill="url(#w54)"/><rect x="-10" y="440" width="860" height="8.5" fill="url(#w55)"/><rect x="-10" y="448" width="860" height="8.5" fill="url(#w56)"/></g>
<rect x="-10" y="270" width="760" height="12" fill="#03224a" opacity="0.6" filter="url(#b2)"/>
<!-- logo panes (visible part right of window) -->
<filter color-interpolation-filters="sRGB" id="b5" x="-50%" y="-100%" width="200%" height="300%"><feGaussianBlur stdDeviation="5"/></filter>
<filter color-interpolation-filters="sRGB" id="b3" x="-30%" y="-60%" width="160%" height="220%"><feGaussianBlur stdDeviation="2.5"/></filter>
<linearGradient id="p1low" gradientUnits="userSpaceOnUse" x1="0" y1="210" x2="0" y2="275"><stop offset="0" stop-color="#9ad6f5"/><stop offset="1" stop-color="#abdef8"/></linearGradient>
<linearGradient id="p2top" gradientUnits="userSpaceOnUse" x1="0" y1="284" x2="0" y2="350"><stop offset="0" stop-color="#a2daf6"/><stop offset="1" stop-color="#8ad0f4"/></linearGradient>
<clipPath id="cpr"><rect x="731" y="0" width="120" height="472"/></clipPath>
<g clip-path="url(#cpr)">
<polygon points="690,141 831,150 831,275 690,275" fill="#0a7cd4" filter="url(#b1)"/>
<polygon points="690,150 800,160 831,165 831,175 690,168" fill="#1590e2" opacity="0.7" filter="url(#b3)"/>
<polygon points="690,172 831,186 831,206 690,199" fill="#3ab0ec" opacity="0.9" filter="url(#b3)"/>
<polygon points="690,204 831,217 831,275 690,275" fill="url(#p1low)" filter="url(#b1)"/>
<polygon points="690,202.5 831,215.5 831,220 690,207.5" fill="#dcf4ff" opacity="0.85" filter="url(#b1)"/>
<polygon points="690,284 831,284 831,347 690,360" fill="url(#p2top)" filter="url(#b1)"/>
<polygon points="690,356 831,343 831,348 690,361" fill="#e2f6ff" opacity="0.8" filter="url(#b1)"/>
<polygon points="690,359 831,346 831,372 690,397" fill="#36adec" filter="url(#b1)"/>
<polygon points="690,396 831,371 831,410 690,428" fill="#0a80d8" filter="url(#b1)"/>
<polygon points="690,402 760,408 831,412 740,408" fill="#7fcaf2" opacity="0.5" filter="url(#b2)"/>
<ellipse cx="820" cy="409" rx="12" ry="3.5" fill="#bfe9ff" opacity="0.5" filter="url(#b2)"/>
<linearGradient id="hsat" gradientUnits="userSpaceOnUse" x1="731" y1="0" x2="831" y2="0"><stop offset="0" stop-color="#3aaeee" stop-opacity="0.55"/><stop offset="0.6" stop-color="#3aaeee" stop-opacity="0.1"/><stop offset="1" stop-color="#ffffff" stop-opacity="0.25"/></linearGradient>
<rect x="731" y="218" width="100" height="128" fill="url(#hsat)"/>
<rect x="690" y="274.5" width="142" height="10" fill="#0d4f8e" filter="url(#b1)"/>
<rect x="831.5" y="148" width="9" height="265" fill="#0a4580"/>
<!-- highlights -->
</g>
<ellipse cx="790" cy="140" rx="45" ry="9" fill="#2a9ae8" opacity="0.55" filter="url(#b5)"/>
<polygon points="770,141.5 831,147.5 831,151.5 805,148" fill="#d8f3ff" opacity="0.9" filter="url(#b3)"/>
<polygon points="785,143.5 831,148 831,151 810,148.5" fill="#effaff" opacity="0.9" filter="url(#b1)"/>
<line x1="831" y1="150" x2="831" y2="410" stroke="#bfe9ff" stroke-width="1" opacity="0.7"/>
<polygon points="790,412 831,406 831,411 805,414" fill="#e8f8ff" opacity="0.85" filter="url(#b3)"/>
<polygon points="735,400 831,410 831,413 735,403" fill="#a8dcf8" opacity="0.5" filter="url(#b3)"/>
<polygon points="680,391 740,396 800,410 740,400" fill="#9ad6f7" opacity="0.45" filter="url(#b2)"/>
<linearGradient id="streakfade" gradientUnits="userSpaceOnUse" x1="180" y1="0" x2="540" y2="0"><stop offset="0" stop-color="#3a78b8" stop-opacity="0"/><stop offset="0.45" stop-color="#3a78b8" stop-opacity="1"/><stop offset="1" stop-color="#3a78b8" stop-opacity="0.3"/></linearGradient>
<polygon points="180,6 330,28 540,70 480,70 320,40 180,18" fill="url(#streakfade)" opacity="0.2" filter="url(#b3)"/>
<linearGradient id="beamfade" gradientUnits="userSpaceOnUse" x1="0" y1="0" x2="350" y2="0"><stop offset="0" stop-color="#1a6cc0" stop-opacity="0"/><stop offset="1" stop-color="#1a6cc0" stop-opacity="1"/></linearGradient>
<polygon points="0,450 250,412 424,394 640,384 640,370 0,370" fill="url(#beamfade)" opacity="0.35" filter="url(#b2)"/>
<polygon points="116,428 300,402 424,392 300,407" fill="#5aa0e0" opacity="0.25" filter="url(#b2)"/>
</svg>
<svg class="r" style="left:13px;top:50.3px" width="15" height="15" viewBox="0 0 21 23" preserveAspectRatio="none">
<path d="M0.3 1.5 L13 0.3 L20.2 2 L17.5 21.5 L12.5 22.7 L2 21 Z" fill="#e9ecef"/>
<path d="M13 0.3 L20.2 2 L17.5 21.5 L12.5 22.7 Z" fill="#c9cfd5"/>
<path d="M0.3 1.5 L13 0.3 L20.2 2 L13 3.3 Z" fill="#f7f8f9"/>
<path d="M3 5 L4 19 M7 4.5 L7.5 20 M16 5 L15 20" stroke="#d5dae0" stroke-width="0.9"/>
<path d="M4.5 11 L6.3 8.5 L8.5 9.3 M9.8 10.2 L11.3 13 L10 15.5 M8.3 16 L5 15.5 L4 13" fill="none" stroke="#1f7fdc" stroke-width="2"/>
</svg>
<div class="t" style="left:8px;top:69.25px;font-size:7.1px;color:#fff;text-shadow:0 0 2px #000;transform:scaleX(0.95);transform-origin:0 0;">Корзина</div>
<svg class="r" style="left:11px;top:95.5px" width="20" height="18" viewBox="0 0 20 18">
<path d="M3.5 0.5 V7.5 M0.2 4 H7.2" stroke="#2dd02d" stroke-width="2.2"/>
<path d="M5 7.5 L15 4.5 L19 6 L19 11 L9 14.5 L5 12.5 Z" fill="#dfe3e7"/>
<path d="M5 7.5 L15 4.5 L19 6 L9 9 Z" fill="#f4f6f8"/>
<path d="M9 9 L19 6 V11 L9 14.5 Z" fill="#c3c9cf"/>
<path d="M11 11.5 L17 9.5" stroke="#3fd05a" stroke-width="0.6"/>
<rect x="1" y="10" width="7" height="7" fill="#fff" stroke="#aab" stroke-width="0.4"/>
<path d="M2.5 15.5 L6 12 M3.8 12 H6 V14.2" stroke="#1a6fd0" stroke-width="1.2" fill="none"/>
</svg>
<div class="t" style="left:4px;top:115.32px;font-size:7.3px;color:#fff;text-shadow:0 0 2px #000;transform:scaleX(0.84);transform-origin:0 0;">ASUS N65U</div>
<div class="r" style="left:116px;top:65px;width:617px;height:325px;background:rgba(5,25,55,0.75);"></div>
<div class="r" style="left:117px;top:66px;width:615px;height:323px;background:#ffffff;"></div>
<svg class="r" style="left:120px;top:70px" width="10" height="9" viewBox="0 0 10 9">
<path d="M0.5 1.5 H4 L5 2.5 H9.5 V8.5 H0.5 Z" fill="#f3c94f"/>
<rect x="2.5" y="5" width="5" height="3.5" fill="#2aa3e8"/>
<rect x="4" y="6.5" width="2" height="2" fill="#f3c94f"/>
</svg>
<div class="r" style="left:131.8px;top:71.5px;width:0.7px;height:7px;background:#d0d0d0;"></div>
<svg class="r" style="left:138px;top:70px" width="8" height="9" viewBox="0 0 8 9">
<rect x="0.5" y="0.5" width="7" height="8" fill="#eef3fa" stroke="#9fb4cc" stroke-width="0.7"/>
<path d="M2 4.5 L3.5 6 L6 3" stroke="#6d8fb8" fill="none" stroke-width="0.8"/>
</svg>
<svg class="r" style="left:150px;top:70px" width="6" height="9" viewBox="0 0 6 9">
<path d="M0.5 0.5 H5.5 V8.5 L3 6.5 L0.5 8.5 Z" fill="#c9d6e6"/>
</svg>
<svg class="r" style="left:161.3px;top:73.5px" width="3.2" height="3" viewBox="0 0 4 4"><path d="M0 0.5 H4 L2 3.5 Z" fill="#222"/></svg>
<div class="r" style="left:169.5px;top:71.5px;width:0.7px;height:7px;background:#d0d0d0;"></div>
<div class="t" style="left:173.5px;top:70.51px;font-size:6.84px;color:#9a9a9a;">Проводник</div>
<div class="r" style="left:665px;top:73.2px;width:5.5px;height:0.7px;background:#8a8a8a;"></div>
<div class="r" style="left:690.2px;top:71.2px;width:5.2px;height:5.2px;border:0.7px solid #8a8a8a"></div>
<svg class="r" style="left:715.5px;top:70.8px" width="7" height="7" viewBox="0 0 7 7"><path d="M0.5 0.5 L6.5 6.5 M6.5 0.5 L0.5 6.5" stroke="#8a8a8a" stroke-width="0.7"/></svg>
<div class="r" style="left:117px;top:82px;width:30.2px;height:12.2px;background:#1979ca;"></div>
<div class="t" style="left:32.30000000000001px;width:200px;text-align:center;top:85.69px;font-size:5.6px;color:#fff;">Файл</div>
<div class="r" style="left:147.4px;top:82px;width:35px;height:12.5px;background:#f5f6f7;border:0.7px solid #dadbdc;border-bottom:none;"></div>
<div class="t" style="left:65.5px;width:200px;text-align:center;top:85.94px;font-size:5.52px;color:#222;">Главная</div>
<div class="t" style="left:106.5px;width:200px;text-align:center;top:85.88px;font-size:5.61px;color:#222;">Поделиться</div>
<div class="t" style="left:141.8px;width:200px;text-align:center;top:85.89px;font-size:5.6px;color:#222;">Вид</div>
<svg class="r" style="left:711px;top:85px" width="8" height="6" viewBox="0 0 8 6"><path d="M1 5 L4 2 L7 5" stroke="#777" fill="none" stroke-width="0.8"/></svg>
<div class="r" style="left:722px;top:84.5px;width:8px;height:8px;border-radius:50%;background:#1a73c9"></div>
<div class="t" style="left:626px;width:200px;text-align:center;top:85.02px;font-size:6.5px;color:#fff;font-weight:bold;">?</div>
<div class="r" style="left:117px;top:94px;width:615px;height:49px;background:#f5f6f7;border-top:0.8px solid #dadbdc;border-bottom:0.8px solid #dadbdc;box-sizing:border-box;"></div>
<div class="r" style="left:148.1px;top:93.5px;width:35px;height:1.6px;background:#f5f6f7;"></div>
<svg class="r" style="left:141px;top:100px" width="14" height="13" viewBox="0 0 14 13">
<path d="M7 1 L13 7 L10.5 7.5 L7.5 10.5 L7 13 L1 7 L3.5 6.5 L6.5 3.5 Z" fill="#a7b5c6" transform="rotate(0)"/>
<path d="M3.5 9.5 L0.5 12.5" stroke="#a7b5c6" stroke-width="1.2"/>
</svg>
<div class="t" style="left:48px;width:200px;text-align:center;top:118.07px;font-size:5.63px;color:#8c8c8c;">Закрепить на панели</div>
<div class="t" style="left:48px;width:200px;text-align:center;top:125.37px;font-size:5.63px;color:#8c8c8c;">быстрого доступа</div>
<svg class="r" style="left:186.5px;top:98.5px" width="14" height="16" viewBox="0 0 14 16">
<path d="M0.5 0.5 H6.5 L8.5 2.5 V11.5 H0.5 Z" fill="#e4ebf3" stroke="#c3d0de" stroke-width="0.6"/>
<path d="M1.5 3 H7.5 M1.5 5 H7.5 M1.5 7 H7.5 M1.5 9 H7.5" stroke="#c8d5e3" stroke-width="0.5"/>
<path d="M4.5 4.5 H10.5 L13.3 7.3 V15.5 H4.5 Z" fill="#e4ebf3" stroke="#b1c2d6" stroke-width="0.6"/>
<path d="M5.5 8 H12.5 M5.5 10 H12.5 M5.5 12 H12.5 M5.5 14 H12.5" stroke="#b8c8da" stroke-width="0.5"/>
</svg>
<div class="t" style="left:93px;width:200px;text-align:center;top:118.11px;font-size:5.57px;color:#8c8c8c;">Копировать</div>
<svg class="r" style="left:216.5px;top:98.5px" width="12" height="16" viewBox="0 0 12 16">
<rect x="0.8" y="1.8" width="10.4" height="13.4" rx="0.8" fill="#dde7f2" stroke="#7f96b6" stroke-width="1.1"/>
<rect x="3.5" y="0.3" width="5" height="2.4" fill="#8fa3bb"/>
<path d="M2.5 5 H9.5 M2.5 7.5 H9.5 M2.5 10 H9.5 M2.5 12.5 H9.5" stroke="#eef3f8" stroke-width="0.6"/>
</svg>
<div class="t" style="left:122px;width:200px;text-align:center;top:118.21px;font-size:5.4px;color:#8c8c8c;">Вставить</div>
<svg class="r" style="left:237px;top:98px" width="8" height="8" viewBox="0 0 8 8">
<path d="M1.5 0.5 L5.5 6 M6.5 0.5 L2.5 6" stroke="#a9b6c4" stroke-width="0.8"/>
<circle cx="2" cy="6.5" r="1.2" fill="none" stroke="#a9b6c4" stroke-width="0.7"/>
<circle cx="6" cy="6.5" r="1.2" fill="none" stroke="#a9b6c4" stroke-width="0.7"/>
</svg>
<div class="t" style="left:246px;top:99.69px;font-size:5.6px;color:#8c8c8c;">Вырезать</div>
<svg class="r" style="left:236.5px;top:111px" width="9" height="6" viewBox="0 0 9 6">
<rect x="0" y="0" width="9" height="6" fill="#c9d7e6"/>
<path d="M1.5 1.5 L3 4.5 L4.5 1.5 M5.5 2 H8 M5.5 4 H8" stroke="#5f7fa5" stroke-width="0.6" fill="none"/>
</svg>
<div class="t" style="left:246px;top:111.04px;font-size:5.68px;color:#8c8c8c;">Скопировать путь</div>
<svg class="r" style="left:237px;top:121px" width="8" height="9" viewBox="0 0 8 9">
<rect x="0.5" y="1" width="7" height="7.5" fill="#eef3f8" stroke="#8ea2ba" stroke-width="0.7"/>
<path d="M2.5 6.5 L5 4 M3.5 4 H5 V5.5" stroke="#5577a0" stroke-width="0.7" fill="none"/>
</svg>
<div class="t" style="left:246px;top:122.29px;font-size:5.6px;color:#8c8c8c;">Вставить ярлык</div>
<div class="t" style="left:107px;width:200px;text-align:center;top:136.28px;font-size:5.62px;color:#8a8a8a;">Буфер обмена</div>
<div class="r" style="left:298px;top:97px;width:0.8px;height:44px;background:#e2e3e5;"></div>
<svg class="r" style="left:311px;top:98px" width="16" height="17" viewBox="0 0 16 17">
<path d="M1 1 H9 L11 3 V16 H1 Z" fill="#dce6f0" stroke="#c1d0df" stroke-width="0.6"/>
<path d="M15 9 H9 V6 L4.5 10 L9 14 V11 H15 Z" fill="#9db3cb"/>
</svg>
<div class="t" style="left:217.60000000000002px;width:200px;text-align:center;top:117.59px;font-size:5.6px;color:#8c8c8c;">Переместить</div>
<div class="t" style="left:218.5px;width:200px;text-align:center;top:125.59px;font-size:5.6px;color:#8c8c8c;">в<span style='display:inline-block;width:0;height:0;border-left:1.6px solid transparent;border-right:1.6px solid transparent;border-top:2px solid #a0a0a0;margin-left:2.5px;vertical-align:0.8px'></span></div>
<svg class="r" style="left:346px;top:98px" width="16" height="17" viewBox="0 0 16 17">
<path d="M1 2 H9 L11 4 V16 H1 Z" fill="#dce6f0" stroke="#c1d0df" stroke-width="0.6"/>
<path d="M5 0.5 H12 L15 3.5 V12 H5 Z" fill="#e8eef5" stroke="#b9c8d8" stroke-width="0.6"/>
<path d="M7 5 H13 M7 7 H13 M7 9 H13" stroke="#c8d4e0" stroke-width="0.5"/>
</svg>
<div class="t" style="left:252.5px;width:200px;text-align:center;top:117.59px;font-size:5.6px;color:#8c8c8c;">Копировать</div>
<div class="t" style="left:253.5px;width:200px;text-align:center;top:125.59px;font-size:5.6px;color:#8c8c8c;">в<span style='display:inline-block;width:0;height:0;border-left:1.6px solid transparent;border-right:1.6px solid transparent;border-top:2px solid #a0a0a0;margin-left:2.5px;vertical-align:0.8px'></span></div>
<div class="r" style="left:371.5px;top:100px;width:0.7px;height:24px;background:#e6e7e9;"></div>
<svg class="r" style="left:377px;top:99px" width="14" height="14" viewBox="0 0 14 14">
<path d="M1.2 1.2 L12.8 12.8 M12.8 1.2 L1.2 12.8" stroke="#566c8c" stroke-width="1.8"/>
</svg>
<div class="t" style="left:284.3px;width:200px;text-align:center;top:117.59px;font-size:5.6px;color:#222;-webkit-text-stroke:0.25px #222;">Удалить</div>
<svg class="r" style="left:382.5px;top:126px" width="4" height="3" viewBox="0 0 4 3"><path d="M0 0 H4 L2 2.5 Z" fill="#222"/></svg>
<svg class="r" style="left:409px;top:98px" width="19" height="17" viewBox="0 0 19 17">
<rect x="1" y="5" width="15" height="6" fill="#dce6f0" stroke="#9fb3c9" stroke-width="0.6"/>
<rect x="2.5" y="6.5" width="9" height="3" fill="#7f99b8"/>
<path d="M14 1 V16 M12 1 H16 M12 16 H16" stroke="#7a8ea8" stroke-width="0.9"/>
</svg>
<div class="t" style="left:317.4px;width:200px;text-align:center;top:117.58px;font-size:5.62px;color:#8c8c8c;">Переименовать</div>
<div class="t" style="left:269.7px;width:200px;text-align:center;top:135.69px;font-size:5.6px;color:#8a8a8a;">Упорядочить</div>
<div class="r" style="left:443px;top:97px;width:0.8px;height:44px;background:#e2e3e5;"></div>
<svg class="r" style="left:450px;top:98px" width="12" height="17" viewBox="0 0 12 17">
<path d="M1 1 L11 3 V16 L1 14 Z" fill="#d5e1ee" stroke="#c3d2e2" stroke-width="0.5"/>
</svg>
<div class="t" style="left:356.5px;width:200px;text-align:center;top:117.59px;font-size:5.6px;color:#8c8c8c;">Создать</div>
<div class="t" style="left:356.5px;width:200px;text-align:center;top:125.59px;font-size:5.6px;color:#8c8c8c;">папку</div>
<svg class="r" style="left:469.5px;top:98px" width="8" height="8" viewBox="0 0 8 8">
<rect x="0.5" y="0.5" width="5" height="5" fill="#e8eef5" stroke="#9fb1c6" stroke-width="0.6"/>
<rect x="2.5" y="2.5" width="5" height="5" fill="#d6e1ed" stroke="#9fb1c6" stroke-width="0.6"/>
</svg>
<div class="t" style="left:479.6px;top:99.69px;font-size:5.6px;color:#8c8c8c;">Создать элемент<span style='display:inline-block;width:0;height:0;border-left:1.6px solid transparent;border-right:1.6px solid transparent;border-top:2px solid #a0a0a0;margin-left:2.5px;vertical-align:0.8px'></span></div>
<svg class="r" style="left:469.5px;top:109px" width="8" height="9" viewBox="0 0 8 9">
<path d="M1 1 H5.5 L7.5 3 V8.5 H1 Z" fill="#fff" stroke="#222" stroke-width="0.7"/>
</svg>
<div class="t" style="left:480px;top:110.59px;font-size:5.6px;color:#000;">Простой доступ<span style='display:inline-block;width:0;height:0;border-left:1.6px solid transparent;border-right:1.6px solid transparent;border-top:2px solid #222;margin-left:2.5px;vertical-align:0.8px'></span></div>
<div class="t" style="left:387px;width:200px;text-align:center;top:135.69px;font-size:5.6px;color:#8a8a8a;">Создать</div>
<div class="r" style="left:534px;top:97px;width:0.8px;height:44px;background:#e2e3e5;"></div>
<svg class="r" style="left:541.5px;top:98px" width="13" height="17" viewBox="0 0 13 17">
<path d="M0.5 0.5 H9 L12.5 4 V16.5 H0.5 Z" fill="#e6edf5" stroke="#b5c6d9" stroke-width="0.7"/>
<path d="M3 9 L5.5 11.5 L10 6" stroke="#7f9cc0" stroke-width="1" fill="none"/>
</svg>
<div class="t" style="left:448px;width:200px;text-align:center;top:117.59px;font-size:5.6px;color:#8c8c8c;">Свойства</div>
<div class="t" style="left:448px;width:200px;text-align:center;top:125.09px;font-size:5.6px;color:#8c8c8c;"><span style='display:inline-block;width:0;height:0;border-left:1.6px solid transparent;border-right:1.6px solid transparent;border-top:2px solid #a0a0a0;margin-left:0;vertical-align:0.8px'></span></div>
<svg class="r" style="left:564px;top:98px" width="7" height="9" viewBox="0 0 7 9">
<rect x="0.5" y="0.5" width="5" height="7" fill="#dfe7f0" stroke="#9fb1c6" stroke-width="0.6"/>
<path d="M3 5 L6.5 8.5" stroke="#6f8aab" stroke-width="0.8"/>
</svg>
<div class="t" style="left:572px;top:99.69px;font-size:5.6px;color:#8c8c8c;">Открыть<span style='display:inline-block;width:0;height:0;border-left:1.6px solid transparent;border-right:1.6px solid transparent;border-top:2px solid #a0a0a0;margin-left:5px;vertical-align:0.8px'></span></div>
<svg class="r" style="left:564px;top:110px" width="7" height="9" viewBox="0 0 7 9">
<rect x="0.5" y="0.5" width="6" height="8" fill="#eef3f8" stroke="#a9b9cb" stroke-width="0.6"/>
<path d="M1.5 7 L5.5 2" stroke="#8ea2ba" stroke-width="0.8"/>
</svg>
<div class="t" style="left:572px;top:111.49px;font-size:5.6px;color:#8c8c8c;">Изменить</div>
<svg class="r" style="left:564px;top:122px" width="7" height="9" viewBox="0 0 7 9">
<rect x="0.5" y="0.5" width="6" height="6" fill="#eef3f8" stroke="#a9b9cb" stroke-width="0.6"/>
<circle cx="4" cy="6" r="2.2" fill="#dde6ef" stroke="#8ea2ba" stroke-width="0.6"/>
</svg>
<div class="t" style="left:572px;top:123.29px;font-size:5.6px;color:#8c8c8c;">Журнал</div>
<div class="t" style="left:468.29999999999995px;width:200px;text-align:center;top:135.69px;font-size:5.6px;color:#8a8a8a;">Открыть</div>
<div class="r" style="left:604.7px;top:97px;width:0.8px;height:44px;background:#e2e3e5;"></div>
<svg class="r" style="left:607.5px;top:98.5px" width="9" height="9" viewBox="0 0 9 9">
<rect x="0.3" y="0.3" width="8.4" height="8.4" fill="#8cc0f0" stroke="#3d8ee0" stroke-width="0.6"/><path d="M4.5 0.3 V8.7 M0.3 4.5 H8.7" stroke="#fff" stroke-width="0.8"/>
</svg>
<div class="t" style="left:618px;top:100.00px;font-size:5.43px;color:#222;">Выделить все</div>
<svg class="r" style="left:608px;top:110px" width="8" height="8" viewBox="0 0 8 8" fill="none" stroke="#a0a0a0" stroke-width="0.5">
<rect x="0.5" y="0.5" width="3" height="3"/><rect x="4.5" y="0.5" width="3" height="3"/><rect x="0.5" y="4.5" width="3" height="3"/><rect x="4.5" y="4.5" width="3" height="3"/>
</svg>
<div class="t" style="left:618px;top:111.01px;font-size:5.57px;color:#222;">Снять выделение</div>
<svg class="r" style="left:607.5px;top:120.5px" width="9" height="9" viewBox="0 0 9 9">
<rect x="0.5" y="0.5" width="3.5" height="3.5" fill="none" stroke="#b0b0b0" stroke-width="0.5"/>
<rect x="4.7" y="0.3" width="4" height="4" fill="#8cc0f0" stroke="#3d8ee0" stroke-width="0.6"/><rect x="0.3" y="4.7" width="4" height="4" fill="#8cc0f0" stroke="#3d8ee0" stroke-width="0.6"/><rect x="5" y="5" width="3.5" height="3.5" fill="#cfe3f7"/>
</svg>
<div class="t" style="left:618px;top:122.11px;font-size:5.57px;color:#222;">Обратить выделение</div>
<div class="t" style="left:541px;width:200px;text-align:center;top:136.09px;font-size:5.6px;color:#8a8a8a;">Выделить</div>
<div class="r" style="left:678.5px;top:97px;width:0.8px;height:44px;background:#e2e3e5;"></div>
<svg class="r" style="left:123px;top:150px" width="60" height="8" viewBox="0 0 60 8" fill="none" stroke-width="0.8">
<path d="M7.5 4 H1.5 M4 1.5 L1.5 4 L4 6.5" stroke="#c3c3c3"/>
<path d="M17 4 H23.5 M21 1.5 L23.5 4 L21 6.5" stroke="#c3c3c3"/>
<path d="M32.5 3 L34.5 5 L36.5 3" stroke="#c3c3c3"/>
<path d="M45 7.5 V1 M42.5 3.5 L45 1 L47.5 3.5" stroke="#333" stroke-width="0.9"/>
</svg>
<div class="r" style="left:175.5px;top:147.6px;width:435.2px;height:11px;border:0.8px solid #d9d9d9;box-sizing:border-box;"></div>
<svg class="r" style="left:177.5px;top:150px" width="7" height="7" viewBox="0 0 10 10"><path d="M5 0 L6.2 3.6 L10 3.7 L7 6 L8.1 9.7 L5 7.5 L1.9 9.7 L3 6 L0 3.7 L3.8 3.6 Z" fill="#2a8ee0"/></svg>
<svg class="r" style="left:188.5px;top:151.3px" width="3" height="5" viewBox="0 0 3 5"><path d="M0.6 0.5 L2.4 2.5 L0.6 4.5" fill="none" stroke="#444" stroke-width="0.7"/></svg>
<div class="t" style="left:196.4px;top:150.09px;font-size:6.56px;color:#111;">Панель быстрого доступа</div>
<svg class="r" style="left:279.2px;top:151.3px" width="3" height="5" viewBox="0 0 3 5"><path d="M0.6 0.5 L2.4 2.5 L0.6 4.5" fill="none" stroke="#444" stroke-width="0.7"/></svg>
<svg class="r" style="left:592.5px;top:151.3px" width="20" height="6" viewBox="0 0 20 6" fill="none" stroke="#555" stroke-width="0.7">
<path d="M1 1.5 L3 3.5 L5 1.5"/>
</svg>
<div class="r" style="left:600.5px;top:148px;width:0.7px;height:10px;background:#e6e6e6;"></div>
<svg class="r" style="left:602px;top:149.6px" width="8" height="8" viewBox="0 0 8 8" fill="none" stroke="#555" stroke-width="0.8">
<path d="M6.5 4 A2.6 2.6 0 1 1 5.2 1.8"/><path d="M4.5 0.5 L5.8 1.9 L4.2 3"/>
</svg>
<div class="r" style="left:617px;top:147.5px;width:110px;height:11px;border:0.8px solid #d9d9d9;box-sizing:border-box;"></div>
<div class="t" style="left:620.7px;top:150.12px;font-size:6.5px;color:#6d6d6d;">Поиск: Панель быстрого дос...</div>
<svg class="r" style="left:717px;top:149.5px" width="7" height="7" viewBox="0 0 7 7" fill="none" stroke="#444" stroke-width="0.8">
<circle cx="4.2" cy="2.8" r="2"/><path d="M2.8 4.2 L0.6 6.4"/>
</svg>
<div class="r" style="left:117px;top:168px;width:77.5px;height:13.2px;background:#d9d9d9;"></div>
<div class="r" style="left:195px;top:163px;width:8px;height:213px;background:#f0f0f0;"></div>
<div class="r" style="left:196px;top:171.5px;width:6px;height:88px;background:#cdcdcd;"></div>
<svg class="r" style="left:196.5px;top:166px" width="5" height="4" viewBox="0 0 5 4" fill="none" stroke="#555" stroke-width="0.8"><path d="M0.5 3 L2.5 1 L4.5 3"/></svg>
<svg class="r" style="left:196.5px;top:370px" width="5" height="4" viewBox="0 0 5 4" fill="none" stroke="#555" stroke-width="0.8"><path d="M0.5 1 L2.5 3 L4.5 1"/></svg>
<svg class="r" style="left:131.5px;top:171.5px" width="7" height="7" viewBox="0 0 10 10"><path d="M5 0 L6.2 3.6 L10 3.7 L7 6 L8.1 9.7 L5 7.5 L1.9 9.7 L3 6 L0 3.7 L3.8 3.6 Z" fill="#2a8ee0"/></svg>
<div class="t" style="left:140.8px;top:171.29px;font-size:6.56px;color:#111;">Панель быстрого</div>
<svg class="r" style="left:136px;top:183.3px" width="7" height="9" viewBox="0 0 7 9">
<rect x="0" y="0.6" width="4.8" height="6.8" fill="#f1c85e"/><path d="M0 0.6 L1.8 1.8 V8.6 L0 7.4 Z" fill="#fbe3a0"/><rect x="2" y="3.8" width="5" height="3.4" fill="#1e90ea"/></svg>
<div class="t" style="left:145px;top:183.99px;font-size:6.56px;color:#111;width:47px;overflow:hidden;">Рабочий стол</div>
<svg class="r" style="left:187px;top:184.5px" width="6" height="6" viewBox="0 0 6 6"><path d="M3.5 0.5 L5.5 2.5 L4.3 2.9 L3 4.2 L2.8 5 L1 3.2 L1.8 3 L3.1 1.7 Z M1.8 4.2 L0.3 5.7" fill="#8a8a8a" stroke="#8a8a8a" stroke-width="0.5"/></svg>
<svg class="r" style="left:136px;top:196.70000000000002px" width="7" height="9" viewBox="0 0 7 9">
<rect x="0" y="0.6" width="4.8" height="6.8" fill="#f1c85e"/><path d="M0 0.6 L1.8 1.8 V8.6 L0 7.4 Z" fill="#fbe3a0"/><path d="M3.3 3.5 H5.1 V5.5 H6.6 L4.2 8 L1.8 5.5 H3.3 Z" fill="#2a7fd0"/></svg>
<div class="t" style="left:145px;top:197.39px;font-size:6.56px;color:#111;width:47px;overflow:hidden;">Загрузки</div>
<svg class="r" style="left:187px;top:197.9px" width="6" height="6" viewBox="0 0 6 6"><path d="M3.5 0.5 L5.5 2.5 L4.3 2.9 L3 4.2 L2.8 5 L1 3.2 L1.8 3 L3.1 1.7 Z M1.8 4.2 L0.3 5.7" fill="#8a8a8a" stroke="#8a8a8a" stroke-width="0.5"/></svg>
<svg class="r" style="left:136px;top:209.8px" width="7" height="9" viewBox="0 0 7 9">
<rect x="0" y="0.6" width="4.8" height="6.8" fill="#f1c85e"/><path d="M0 0.6 L1.8 1.8 V8.6 L0 7.4 Z" fill="#fbe3a0"/><path d="M2 2 H5 L6.7 3.7 V8.5 H2 Z" fill="#fafbfc" stroke="#9aa6b4" stroke-width="0.4"/><path d="M3 5 L3.7 3.3 L4.4 5" stroke="#3a8ae0" stroke-width="0.5" fill="none"/></svg>
<div class="t" style="left:145px;top:210.49px;font-size:6.56px;color:#111;width:47px;overflow:hidden;">Документы</div>
<svg class="r" style="left:187px;top:211.0px" width="6" height="6" viewBox="0 0 6 6"><path d="M3.5 0.5 L5.5 2.5 L4.3 2.9 L3 4.2 L2.8 5 L1 3.2 L1.8 3 L3.1 1.7 Z M1.8 4.2 L0.3 5.7" fill="#8a8a8a" stroke="#8a8a8a" stroke-width="0.5"/></svg>
<svg class="r" style="left:136px;top:223.20000000000002px" width="7" height="9" viewBox="0 0 7 9">
<rect x="0" y="0.6" width="4.8" height="6.8" fill="#f1c85e"/><path d="M0 0.6 L1.8 1.8 V8.6 L0 7.4 Z" fill="#fbe3a0"/><rect x="2" y="4.5" width="5" height="3.6" fill="#e6eef5" stroke="#9aa6b4" stroke-width="0.3"/><path d="M2.2 7.9 L4 6 L6.8 7.9 Z" fill="#3b7a52"/></svg>
<div class="t" style="left:145px;top:223.89px;font-size:6.56px;color:#111;width:47px;overflow:hidden;">Изображения</div>
<svg class="r" style="left:187px;top:224.4px" width="6" height="6" viewBox="0 0 6 6"><path d="M3.5 0.5 L5.5 2.5 L4.3 2.9 L3 4.2 L2.8 5 L1 3.2 L1.8 3 L3.1 1.7 Z M1.8 4.2 L0.3 5.7" fill="#8a8a8a" stroke="#8a8a8a" stroke-width="0.5"/></svg>
<svg class="r" style="left:135.5px;top:236px" width="8" height="9" viewBox="0 0 8 9"><path d="M0.8 1 H7.2 L6.5 8.5 H1.5 Z" fill="#e6ecf2" stroke="#9aa8b8" stroke-width="0.4"/><circle cx="4" cy="5" r="1.3" fill="none" stroke="#2a86d8" stroke-width="0.8"/></svg>
<div class="t" style="left:145px;top:236.99px;font-size:6.56px;color:#111;">Корзина</div>
<svg class="r" style="left:187px;top:237.5px" width="6" height="6" viewBox="0 0 6 6"><path d="M3.5 0.5 L5.5 2.5 L4.3 2.9 L3 4.2 L2.8 5 L1 3.2 L1.8 3 L3.1 1.7 Z M1.8 4.2 L0.3 5.7" fill="#8a8a8a" stroke="#8a8a8a" stroke-width="0.5"/></svg>
<svg class="r" style="left:136px;top:249px" width="7" height="9" viewBox="0 0 7 9">
<rect x="0" y="0.6" width="4.8" height="6.8" fill="#f1c85e"/><path d="M0 0.6 L1.8 1.8 V8.6 L0 7.4 Z" fill="#fbe3a0"/></svg>
<div class="t" style="left:145px;top:249.69px;font-size:6.56px;color:#111;width:49px;overflow:hidden;">Снимки экрана</div>
<svg class="r" style="left:130px;top:267.3px" width="8.2" height="5.4" viewBox="0 0 9 6"><path d="M1.3 5.8 A1.4 1.4 0 0 1 1.4 3 A2.4 2.4 0 0 1 5.6 1.5 A2 2 0 0 1 8.9 5.8 Z" fill="#1d4fb5"/></svg>
<div class="t" style="left:140.7px;top:267.19px;font-size:6.56px;color:#111;">OneDrive</div>
<svg class="r" style="left:136px;top:279.40000000000003px" width="7" height="9" viewBox="0 0 7 9">
<rect x="0" y="0.6" width="4.8" height="6.8" fill="#f1c85e"/><path d="M0 0.6 L1.8 1.8 V8.6 L0 7.4 Z" fill="#fbe3a0"/></svg>
<div class="t" style="left:145px;top:280.09px;font-size:6.56px;color:#111;">Pictures</div>
<svg class="r" style="left:136px;top:293.1px" width="7" height="9" viewBox="0 0 7 9">
<rect x="0" y="0.6" width="4.8" height="6.8" fill="#f1c85e"/><path d="M0 0.6 L1.8 1.8 V8.6 L0 7.4 Z" fill="#fbe3a0"/></svg>
<div class="t" style="left:145px;top:293.79px;font-size:6.56px;color:#111;">Документы</div>
<svg class="r" style="left:136px;top:305.7px" width="7" height="9" viewBox="0 0 7 9">
<rect x="0" y="0.6" width="4.8" height="6.8" fill="#f1c85e"/><path d="M0 0.6 L1.8 1.8 V8.6 L0 7.4 Z" fill="#fbe3a0"/></svg>
<div class="t" style="left:145px;top:306.39px;font-size:6.56px;color:#111;">музыка</div>
<svg class="r" style="left:136px;top:319.40000000000003px" width="7" height="9" viewBox="0 0 7 9">
<rect x="0" y="0.6" width="4.8" height="6.8" fill="#f1c85e"/><path d="M0 0.6 L1.8 1.8 V8.6 L0 7.4 Z" fill="#fbe3a0"/></svg>
<div class="t" style="left:145px;top:320.09px;font-size:6.56px;color:#111;">Приложения</div>
<svg class="r" style="left:130.5px;top:337px" width="9" height="8" viewBox="0 0 9 8"><path d="M3 0.3 L8.6 1.6 V5.4 L3 4.6 Z" fill="#3d9be6"/><path d="M3 4.6 L8.6 5.4" stroke="#2a70b8" stroke-width="0.5"/><path d="M0.3 7.3 L5 5.8 L6.5 6.6 L2 7.8 Z" fill="#c5cbd2"/></svg>
<div class="t" style="left:140.7px;top:337.19px;font-size:6.56px;color:#111;">Этот компьютер</div>
<svg class="r" style="left:136px;top:349.4px" width="7" height="9" viewBox="0 0 7 9">
<rect x="0" y="0.6" width="4.8" height="6.8" fill="#f1c85e"/><path d="M0 0.6 L1.8 1.8 V8.6 L0 7.4 Z" fill="#fbe3a0"/><rect x="2" y="1.8" width="4.5" height="6.6" fill="#2b2b2b"/><rect x="3" y="2.6" width="2.5" height="1.6" fill="#3a8ae0"/><rect x="3" y="5" width="2.5" height="1.6" fill="#d04a3a"/></svg>
<div class="t" style="left:145px;top:350.09px;font-size:6.56px;color:#111;">Видео</div>
<svg class="r" style="left:136px;top:362.8px" width="7" height="9" viewBox="0 0 7 9">
<rect x="0" y="0.6" width="4.8" height="6.8" fill="#f1c85e"/><path d="M0 0.6 L1.8 1.8 V8.6 L0 7.4 Z" fill="#fbe3a0"/><path d="M2 2 H5 L6.7 3.7 V8.5 H2 Z" fill="#fafbfc" stroke="#9aa6b4" stroke-width="0.4"/><path d="M3 5 L3.7 3.3 L4.4 5" stroke="#3a8ae0" stroke-width="0.5" fill="none"/></svg>
<div class="t" style="left:145px;top:363.49px;font-size:6.56px;color:#111;">Документы</div>
<svg class="r" style="left:136px;top:374px" width="7" height="2" viewBox="0 0 7 9">
<rect x="0" y="0.6" width="4.8" height="6.8" fill="#f1c85e"/><path d="M0 0.6 L1.8 1.8 V8.6 L0 7.4 Z" fill="#fbe3a0"/></svg>
<div class="t" style="left:124px;top:379.46px;font-size:6.6px;color:#222;">Элементов: 9</div>
<div class="r" style="left:167.5px;top:379px;width:0.6px;height:8px;background:#e3e3e3;"></div>
<svg class="r" style="left:707px;top:379px" width="20" height="8" viewBox="0 0 20 8">
<rect x="0.3" y="0.3" width="1.8" height="1.8" fill="#6aa8e8"/><rect x="0.3" y="3.1" width="1.8" height="1.8" fill="#9aa"/><rect x="0.3" y="5.9" width="1.8" height="1.8" fill="#e89a8a"/>
<path d="M3 1.2 H6.5 M3 4 H6.5 M3 6.8 H6.5" stroke="#666" stroke-width="0.6"/>
<rect x="10" y="0" width="9.5" height="8" fill="#e8eef5"/>
<rect x="11.2" y="1.2" width="7.2" height="5.6" fill="#7fbdf0"/><path d="M11.2 6.8 L11.2 4.5 L14 3.8 L18.4 5.2 V6.8 Z" fill="#24506a"/>
</svg>
<svg class="r" style="left:209.5px;top:172px" width="5" height="4" viewBox="0 0 5 4" fill="none" stroke="#7c7c7c" stroke-width="0.7"><path d="M0.5 1 L2.5 3 L4.5 1"/></svg>
<div class="t" style="left:218px;top:169.90px;font-size:7.5px;color:#1e3287;">Часто используемые папки (6)</div>
<div class="r" style="left:331.5px;top:173.7px;width:397.0px;height:0.8px;background:#e5e5e5;"></div>
<svg class="r" style="left:220.4px;top:190.1px" width="24" height="23" viewBox="0 0 24 23">
<rect x="0" y="0" width="13.6" height="18" fill="#f3cd6c"/>
<rect x="4.8" y="0" width="8.8" height="18" fill="#f7d886"/>
<path d="M0 0 L4.8 4 V22 L0 18 Z" fill="#fbe3a2"/>
<path d="M4.8 4 V22" stroke="#ecc35a" stroke-width="0.6"/><rect x="6.5" y="10.5" width="13.5" height="10" fill="#1b93f0"/><path d="M10 20.5 L20 12 V20.5 Z" fill="#3aa5f5" opacity="0.6"/></svg>
<div class="t" style="left:245px;top:188.49px;font-size:6.55px;color:#111;">Рабочий стол</div>
<div class="t" style="left:245px;top:197.72px;font-size:6.5px;color:#6d6d6d;">Этот компьютер</div>
<svg class="r" style="left:245.5px;top:206.5px" width="6" height="6" viewBox="0 0 6 6"><path d="M3.5 0.5 L5.5 2.5 L4.3 2.9 L3 4.2 L2.8 5 L1 3.2 L1.8 3 L3.1 1.7 Z M1.8 4.2 L0.3 5.7" fill="#8a8a8a" stroke="#8a8a8a" stroke-width="0.5"/></svg>
<svg class="r" style="left:345.1px;top:190.1px" width="24" height="23" viewBox="0 0 24 23">
<rect x="0" y="0" width="13.6" height="18" fill="#f3cd6c"/>
<rect x="4.8" y="0" width="8.8" height="18" fill="#f7d886"/>
<path d="M0 0 L4.8 4 V22 L0 18 Z" fill="#fbe3a2"/>
<path d="M4.8 4 V22" stroke="#ecc35a" stroke-width="0.6"/><path d="M10.9 7.8 H15.9 V13.9 H19.3 L13.3 20 L7.4 13.9 H10.9 Z" fill="#2a8fe6"/></svg>
<div class="t" style="left:369.7px;top:188.49px;font-size:6.55px;color:#111;">Загрузки</div>
<div class="t" style="left:369.7px;top:197.72px;font-size:6.5px;color:#6d6d6d;">Этот компьютер</div>
<svg class="r" style="left:370.5px;top:206.5px" width="6" height="6" viewBox="0 0 6 6"><path d="M3.5 0.5 L5.5 2.5 L4.3 2.9 L3 4.2 L2.8 5 L1 3.2 L1.8 3 L3.1 1.7 Z M1.8 4.2 L0.3 5.7" fill="#8a8a8a" stroke="#8a8a8a" stroke-width="0.5"/></svg>
<svg class="r" style="left:469.8px;top:190.1px" width="24" height="23" viewBox="0 0 24 23">
<rect x="0" y="0" width="13.6" height="18" fill="#f3cd6c"/>
<rect x="4.8" y="0" width="8.8" height="18" fill="#f7d886"/>
<path d="M0 0 L4.8 4 V22 L0 18 Z" fill="#fbe3a2"/>
<path d="M4.8 4 V22" stroke="#ecc35a" stroke-width="0.6"/><path d="M6.7 4.7 H15 L18.6 8.3 V20.3 H6.7 Z" fill="#fbfbfb" stroke="#c8cdd2" stroke-width="0.5"/><path d="M8 10 L9.5 6 L10.5 10 M8.5 8.5 H10.2" stroke="#2f86dc" stroke-width="0.8" fill="none"/><path d="M8 11.5 H17" stroke="#5aa0e0" stroke-width="0.7"/><rect x="13" y="12.5" width="4.5" height="3" fill="#1d4f86"/><path d="M8 13.5 H12 M8 17 H17 M8 18.5 H17" stroke="#d0d4d8" stroke-width="0.5"/></svg>
<div class="t" style="left:493.7px;top:188.49px;font-size:6.55px;color:#111;">Документы</div>
<div class="t" style="left:493.7px;top:197.72px;font-size:6.5px;color:#6d6d6d;">Этот компьютер</div>
<svg class="r" style="left:494.5px;top:206.5px" width="6" height="6" viewBox="0 0 6 6"><path d="M3.5 0.5 L5.5 2.5 L4.3 2.9 L3 4.2 L2.8 5 L1 3.2 L1.8 3 L3.1 1.7 Z M1.8 4.2 L0.3 5.7" fill="#8a8a8a" stroke="#8a8a8a" stroke-width="0.5"/></svg>
<svg class="r" style="left:594.4px;top:190.1px" width="24" height="23" viewBox="0 0 24 23">
<rect x="0" y="0" width="13.6" height="18" fill="#f3cd6c"/>
<rect x="4.8" y="0" width="8.8" height="18" fill="#f7d886"/>
<path d="M0 0 L4.8 4 V22 L0 18 Z" fill="#fbe3a2"/>
<path d="M4.8 4 V22" stroke="#ecc35a" stroke-width="0.6"/><rect x="6" y="10" width="14" height="10.2" fill="#fff" stroke="#c8cdd2" stroke-width="0.4"/><rect x="6.6" y="10.6" width="12.8" height="9" fill="#6fb4ea"/><path d="M6.6 16 C9 13.5 12 14 14 15.5 C16 16.5 18 16.8 19.4 17 V19.6 H6.6 Z" fill="#3b7a52"/><rect x="6.6" y="18" width="12.8" height="1.6" fill="#4a8fc8"/></svg>
<div class="t" style="left:618.8px;top:188.49px;font-size:6.55px;color:#111;">Изображения</div>
<div class="t" style="left:618.8px;top:197.72px;font-size:6.5px;color:#6d6d6d;">Этот компьютер</div>
<svg class="r" style="left:619.5px;top:206.5px" width="6" height="6" viewBox="0 0 6 6"><path d="M3.5 0.5 L5.5 2.5 L4.3 2.9 L3 4.2 L2.8 5 L1 3.2 L1.8 3 L3.1 1.7 Z M1.8 4.2 L0.3 5.7" fill="#8a8a8a" stroke="#8a8a8a" stroke-width="0.5"/></svg>
<svg class="r" style="left:218.5px;top:224.5px" width="21" height="23" viewBox="0 0 21 23">
<path d="M0.3 1.5 L13 0.3 L20.2 2 L17.5 21.5 L12.5 22.7 L2 21 Z" fill="#e9ecef"/>
<path d="M13 0.3 L20.2 2 L17.5 21.5 L12.5 22.7 Z" fill="#d3d8dd"/>
<path d="M0.3 1.5 L13 0.3 L20.2 2 L13 3.3 Z" fill="#f7f8f9"/>
<path d="M3 5 L4 19 M7 4.5 L7.5 20 M16 5 L15 20" stroke="#dfe3e7" stroke-width="0.7"/>
<path d="M4.5 11 L6.3 8.5 L8.5 9.3 M9.8 10.2 L11.3 13 L10 15.5 M8.3 16 L5 15.5 L4 13" fill="none" stroke="#1f7fdc" stroke-width="1.6"/>
</svg>
<div class="t" style="left:245px;top:223.99px;font-size:6.55px;color:#111;">Корзина</div>
<div class="t" style="left:245px;top:233.32px;font-size:6.5px;color:#6d6d6d;">Рабочий стол</div>
<svg class="r" style="left:245.5px;top:242.5px" width="6" height="6" viewBox="0 0 6 6"><path d="M3.5 0.5 L5.5 2.5 L4.3 2.9 L3 4.2 L2.8 5 L1 3.2 L1.8 3 L3.1 1.7 Z M1.8 4.2 L0.3 5.7" fill="#8a8a8a" stroke="#8a8a8a" stroke-width="0.5"/></svg>
<svg class="r" style="left:345px;top:225.8px" width="18" height="22" viewBox="0 0 18 22">
<rect x="0" y="0" width="13.3" height="18" fill="#f3cd6c"/>
<path d="M0 0 L3.2 2 V22 L0 19.5 Z" fill="#fbe3a2"/>
<path d="M3 1.3 L17 2.6 V21 L3 20.8 Z" fill="#fbfcfd" stroke="#c8cdd2" stroke-width="0.3"/>
<path d="M3 1.3 L17 2.6 V5.2 L3 4.3 Z" fill="#0c2d5e"/>
<path d="M3 16.8 L17 17.2 V21 L3 20.8 Z" fill="#0c2d5e"/>
<path d="M10 20.2 L17 17.5 V21 Z" fill="#1a7fe0"/>
<path d="M5 9 H15 M5 11.5 H15" stroke="#e4e8ee" stroke-width="0.6"/>
<path d="M6 10.2 H7 M9.5 10.2 H10.5 M13 10.2 H14" stroke="#e9c46a" stroke-width="0.6"/>
</svg>
<div class="t" style="left:369.7px;top:223.99px;font-size:6.55px;color:#111;">Снимки экрана</div>
<div class="t" style="left:369.7px;top:233.32px;font-size:6.5px;color:#6d6d6d;">Этот компь...\Изображения</div>
<svg class="r" style="left:209.5px;top:267.4px" width="5" height="4" viewBox="0 0 5 4" fill="none" stroke="#7c7c7c" stroke-width="0.7"><path d="M0.5 1 L2.5 3 L4.5 1"/></svg>
<div class="t" style="left:218px;top:265.30px;font-size:7.5px;color:#1e3287;">Последние файлы (3)</div>
<div class="r" style="left:297px;top:269.09999999999997px;width:431.5px;height:0.8px;background:#e5e5e5;"></div>
<div class="r" style="left:213px;top:281.5px;width:518px;height:13.5px;background:#e5f3ff;"></div>
<svg class="r" style="left:215.5px;top:284.6px" width="13" height="6.4" viewBox="0 0 13 6.4"><rect x="0.6" y="0.6" width="11.8" height="5.2" fill="#fff" stroke="#0b1d3d" stroke-width="1.2"/><path d="M12.4 1 V5.4" stroke="#2a7fd8" stroke-width="0.9"/></svg>
<div class="t" style="left:233.5px;top:284.88px;font-size:6.57px;color:#111;">Снимок экрана (220)</div>
<div class="t" style="left:484.2px;top:285.05px;font-size:6.62px;color:#555;">Этот компьютер\Изображения\Screenshots</div>
<svg class="r" style="left:216px;top:296px" width="13" height="12" viewBox="0 0 13 12">
<path d="M2 0.5 H9.5 L12.5 3.5 V11.5 H2 Z" fill="#e6edf5" stroke="#b3c3d6" stroke-width="0.6"/>
<path d="M9.5 0.5 V3.5 H12.5" fill="#f6f9fc" stroke="#b3c3d6" stroke-width="0.5"/>
<rect x="0" y="1" width="6" height="5.2" fill="#2f7fd6"/>
<path d="M1 3.2 L2.6 5 L5 2" stroke="#fff" stroke-width="0.9" fill="none"/>
<path d="M4 8 H11 M4 9.7 H11" stroke="#c9d5e3" stroke-width="0.5"/>
</svg>
<div class="t" style="left:233.5px;top:298.19px;font-size:6.55px;color:#111;">Обзор Microsoft Lumia 950 XL</div>
<div class="t" style="left:484.2px;top:298.45px;font-size:6.62px;color:#555;">Этот компьютер\Документы</div>
<svg class="r" style="left:216px;top:309.5px" width="13" height="12" viewBox="0 0 13 12">
<path d="M2 0.5 H9.5 L12.5 3.5 V11.5 H2 Z" fill="#e6edf5" stroke="#b3c3d6" stroke-width="0.6"/>
<path d="M9.5 0.5 V3.5 H12.5" fill="#f6f9fc" stroke="#b3c3d6" stroke-width="0.5"/>
<rect x="0" y="1" width="6" height="5.2" fill="#2f7fd6"/>
<path d="M1 3.2 L2.6 5 L5 2" stroke="#fff" stroke-width="0.9" fill="none"/>
<path d="M4 8 H11 M4 9.7 H11" stroke="#c9d5e3" stroke-width="0.5"/>
</svg>
<div class="t" style="left:233.5px;top:311.72px;font-size:6.51px;color:#111;">Continuum</div>
<div class="t" style="left:484.2px;top:311.95px;font-size:6.62px;color:#555;">Этот компьютер\Документы</div>
<div class="r" style="left:0px;top:450px;width:840px;height:22px;background:#082d4e;"></div>
<svg class="r" style="left:9px;top:456px" width="9" height="9" viewBox="0 0 9 9" fill="#fff">
<path d="M0 1.3 L3.9 0.7 V4.2 H0 Z M4.4 0.6 L9 0 V4.2 H4.4 Z M0 4.7 H3.9 V8.3 L0 7.7 Z M4.4 4.7 H9 V9 L4.4 8.4 Z"/></svg>
<div class="r" style="left:26px;top:450px;width:189px;height:22px;background:#375b75;"></div>
<div class="t" style="left:33px;top:456.96px;font-size:7.88px;color:#b9c9d6;">Поиск в интернете и в Windows</div>
<svg class="r" style="left:221.5px;top:456.5px" width="12" height="9" viewBox="0 0 12 9" fill="none" stroke="#fff" stroke-width="0.8">
<rect x="2.5" y="0.5" width="7" height="8"/><path d="M0.5 1.5 V7.5 M11.5 1.5 V7.5"/></svg>
<svg class="r" style="left:249px;top:455.5px" width="13" height="11" viewBox="0 0 13 11">
<path d="M0.5 0.5 H4.5 L5.5 1.5 H12.5 V10.5 H0.5 Z" fill="#f5cf5a"/>
<rect x="0.5" y="2.5" width="12" height="8" fill="#fbdc78"/>
<path d="M3 10.5 V6 H10 V10.5 H8 V8 H5 V10.5 Z" fill="#2a9fe6"/></svg>
<div class="r" style="left:244px;top:470px;width:22.5px;height:2px;background:#a9cbe6;"></div>
<svg class="r" style="left:276.5px;top:454px" width="12" height="13" viewBox="0 0 12 13">
<path d="M4 3 A2 2 0 0 1 8 3" stroke="#fff" fill="none" stroke-width="0.9"/>
<path d="M0.5 3.5 H11.5 V12.5 H0.5 Z" fill="#fff"/>
<path d="M3.5 6 H5.6 V8 H3.5 Z M6.2 6 H8.5 V8 H6.2 Z M3.5 8.6 H5.6 V10.6 H3.5 Z M6.2 8.6 H8.5 V10.6 H6.2 Z" fill="#0a2d4d"/></svg>
<svg class="r" style="left:303.5px;top:455px" width="12" height="12" viewBox="0 0 12 12">
<path d="M11.5 7 H3 C3.2 9.5 5.5 10.8 8 10.5 C9.3 10.3 10.4 9.9 11 9.5 V11.2 C9.5 11.9 8 12 6.8 11.9 C3 11.6 0.5 9 0.5 6 C0.5 2.5 3.3 0.2 6.5 0.2 C9.8 0.2 11.8 2.5 11.8 5.5 Z M3.2 5 H8.8 C8.8 3.3 7.8 2.3 6.1 2.3 C4.5 2.3 3.5 3.4 3.2 5 Z" fill="#1e8de8"/></svg>
<svg class="r" style="left:330px;top:455px" width="12.5" height="12.5" viewBox="0 0 12 12">
<circle cx="6" cy="6" r="5.8" fill="#db4437"/>
<path d="M6 6 L0.9 3.1 A5.8 5.8 0 0 0 3.1 11 Z" fill="#0f9d58"/>
<path d="M6 6 L3.1 11 A5.8 5.8 0 0 0 11.1 3.1 L6 3.1 Z" fill="#f4c20d"/>
<circle cx="6" cy="6" r="2.7" fill="#fff"/><circle cx="6" cy="6" r="2.1" fill="#4285f4"/></svg>
<svg class="r" style="left:357px;top:454.5px" width="13" height="13" viewBox="0 0 13 13">
<circle cx="6.5" cy="6.5" r="6.3" fill="#fff"/>
<path d="M3.5 2.5 L6.5 7 L9.5 2.5 M6.5 7 V11" stroke="#e6191f" stroke-width="1.6" fill="none"/></svg>
<svg class="r" style="left:384px;top:454px" width="14" height="14" viewBox="0 0 14 14">
<path d="M13 3 A6 6 0 1 0 13 11 L11 9.5 A3.5 3.5 0 1 1 11 4.5 Z" fill="#e3351f"/>
<path d="M9 1 L4 8" stroke="#3a6fbf" stroke-width="1.2"/>
<path d="M4.5 7 L1 12.5 L4 13 L6.5 9 Z" fill="#f0c27a"/></svg>
<svg class="r" style="left:411px;top:456px" width="12" height="10" viewBox="0 0 12 10" fill="#c8ccd0">
<path d="M0.5 0.5 H2 V2 H3.5 V0.5 H5 V2 H6.5 V0.5 H8 V2 H9.5 V0.5 H11.5 V9.5 H0.5 Z" opacity="0.9"/>
<path d="M1.5 3.5 H10.5 M1.5 5.5 H10.5 M1.5 7.5 H10.5" stroke="#7d868e" stroke-width="0.5"/></svg>
<svg class="r" style="left:438.5px;top:454.5px" width="12.5" height="12.5" viewBox="0 0 12 12">
<circle cx="6" cy="6" r="5.8" fill="#14a8ee"/>
<text x="6" y="9.3" text-anchor="middle" font-family="Liberation Sans" font-weight="bold" font-size="9" fill="#fff">S</text></svg>
<div class="r" style="left:434px;top:470px;width:22px;height:2px;background:#a9cbe6;"></div>
<svg class="r" style="left:695px;top:457px" width="90" height="10" viewBox="0 0 90 10" fill="none" stroke="#fff" stroke-width="0.8">
<path d="M1.5 6.5 L4.5 3 L7.5 6.5"/>
<rect x="14.5" y="3.5" width="8" height="4.5" fill="#fff" stroke="none"/><path d="M12.5 2.5 L14.5 4" />
<rect x="27" y="1" width="7.5" height="6"/><path d="M26 9 H31 M28.5 7 V9"/>
<path d="M39.5 3.5 H41 L43 1.5 V8.5 L41 6.5 H39.5 Z M44.5 3 Q45.5 5 44.5 7 M46 2 Q47.5 5 46 8"/>
<path d="M52.5 1 H61.5 V7.5 H56.5 L55 9 V7.5 H52.5 Z"/><path d="M54.2 3 H59.8 M54.2 5 H59.8" stroke-width="0.6"/>
<rect x="65.5" y="1.8" width="13" height="6.8"/><path d="M67 3.8 H77 M67 6.6 H77" stroke-width="0.45" stroke-dasharray="0.9 0.6"/>
</svg>
<div class="t" style="left:685.7px;width:200px;text-align:center;top:458.45px;font-size:6.3px;color:#fff;">ENG</div>
<div class="t" style="left:717px;width:200px;text-align:center;top:453.19px;font-size:6.39px;color:#dfe6ec;">13:03</div>
<div class="t" style="left:716.5px;width:200px;text-align:center;top:462.02px;font-size:6.19px;color:#dfe6ec;">27.03.2016</div>
<div class="r" style="left:837px;top:450px;width:1px;height:22px;background:#5e7d95;"></div>
</body></html>
